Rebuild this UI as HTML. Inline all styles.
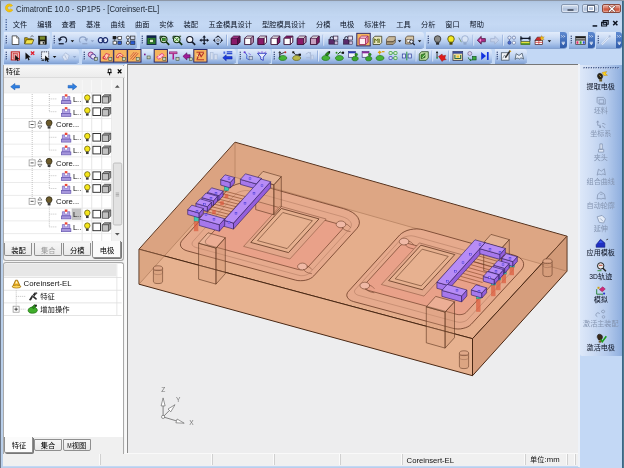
<!DOCTYPE html><html><head><meta charset="utf-8"><title>CimatronE 10.0 - SP1P5 - [Coreinsert-EL]</title><style>
html,body{margin:0;padding:0;background:#c3d8f5;}
body{width:624px;height:468px;overflow:hidden;font-family:"Liberation Sans","Noto Sans CJK SC",sans-serif;}
#app{position:relative;width:624px;height:468px;overflow:hidden;background:#c3d8f5;filter:blur(0.4px);}
#app div, #app svg{position:absolute;}
svg{overflow:visible}
svg text{font-family:"Liberation Sans","Noto Sans CJK SC",sans-serif;}
.t{white-space:nowrap;color:#000;line-height:1;}
</style></head><body><div id="app"><div class="titlebar" style="left:0px;top:0px;width:624px;height:16px;background:linear-gradient(#a9bfdc 0,#b4cae6 3px,#bcd1ec 9px,#c2d7f2 16px);"><svg width="10" height="10" style="left:4px;top:3px" viewBox="0 0 10 10"><path d="M8.6 2.6A4 4 0 1 0 8.8 7L6.6 5.9A1.7 1.7 0 1 1 6.5 3.8Z" fill="#f2c40c" stroke="#d9a400" stroke-width=".5"/></svg><div class="t" id="title" style="left:16px;top:4.9px;font-size:8.6px;color:#1b2430;transform:scaleX(0.898);transform-origin:0 0">CimatronE 10.0 - SP1P5 - [Coreinsert-EL]</div></div>
<div class="winbtns" style="left:560px;top:2px;width:62px;height:12px"><div style="left:1px;top:1.6px;width:18px;height:9.8px;border:1px solid #8697b0;border-radius:2px;box-sizing:border-box;box-shadow:inset 0 0 0 .7px rgba(255,255,255,.55);background:linear-gradient(#d3dfef,#bccbe2 48%,#aebfda 52%,#c6d5ea);"><div style="left:5px;top:4.2px;width:7px;height:2.4px;background:#fff;border:0.6px solid #5a6578;border-radius:1px;box-sizing:border-box"></div></div><div style="left:21.5px;top:1.6px;width:17.5px;height:9.8px;border:1px solid #8697b0;border-radius:2px;box-sizing:border-box;box-shadow:inset 0 0 0 .7px rgba(255,255,255,.55);background:linear-gradient(#d3dfef,#bccbe2 48%,#aebfda 52%,#c6d5ea);"><div style="left:5px;top:1.8px;width:6.6px;height:4.6px;background:transparent;border:1.2px solid #fff;outline:0.6px solid #5a6578;box-sizing:border-box"></div></div><div style="left:41.6px;top:1.6px;width:19.6px;height:9.8px;border:1px solid #8a4a3e;border-radius:2px;box-sizing:border-box;box-shadow:inset 0 0 0 .7px rgba(255,255,255,.35);background:linear-gradient(#e6a799,#d97a66 48%,#cc5038 52%,#dc8068);"><svg width="18" height="8" style="left:0;top:0" viewBox="0 0 18 8"><path d="M6.5 1.6L11.300 6.200M11.300 1.600L6.500 6.200" stroke="#6a342a" stroke-width="2.500" stroke-linecap="round"/><path d="M6.500 1.600L11.300 6.200M11.300 1.600L6.500 6.200" stroke="#fff" stroke-width="1.400" stroke-linecap="round"/></svg></div></div>
<div class="menubar" style="left:0px;top:16px;width:624px;height:16px;background:linear-gradient(#c0d5f1,#c5d9f4 50%,#bed3f0);"><svg width="624" height="16" style="left:0;top:0"><rect x="5.6" y="3.2" width="1.2" height="1.2" fill="#2b4a86"/><rect x="5.6" y="5.7" width="1.2" height="1.2" fill="#2b4a86"/><rect x="5.6" y="8.1" width="1.2" height="1.2" fill="#2b4a86"/><rect x="5.6" y="10.6" width="1.2" height="1.2" fill="#2b4a86"/><rect x="5.6" y="13.0" width="1.2" height="1.2" fill="#2b4a86"/><text x="12.8" y="10.9" font-size="7.25" fill="#0c1424">文件</text><text x="37.2" y="10.9" font-size="7.25" fill="#0c1424">编辑</text><text x="61.6" y="10.9" font-size="7.25" fill="#0c1424">查看</text><text x="86" y="10.9" font-size="7.25" fill="#0c1424">基准</text><text x="110.6" y="10.9" font-size="7.25" fill="#0c1424">曲线</text><text x="135" y="10.9" font-size="7.25" fill="#0c1424">曲面</text><text x="159.3" y="10.9" font-size="7.25" fill="#0c1424">实体</text><text x="183.5" y="10.9" font-size="7.25" fill="#0c1424">装配</text><text x="208.4" y="10.9" font-size="7.25" fill="#0c1424">五金模具设计</text><text x="262" y="10.9" font-size="7.25" fill="#0c1424">型腔模具设计</text><text x="316" y="10.9" font-size="7.25" fill="#0c1424">分模</text><text x="339.8" y="10.9" font-size="7.25" fill="#0c1424">电极</text><text x="364.2" y="10.9" font-size="7.25" fill="#0c1424">标准件</text><text x="396.2" y="10.9" font-size="7.25" fill="#0c1424">工具</text><text x="421" y="10.9" font-size="7.25" fill="#0c1424">分析</text><text x="445.2" y="10.9" font-size="7.25" fill="#0c1424">窗口</text><text x="469.6" y="10.9" font-size="7.25" fill="#0c1424">帮助</text><rect x="592.6" y="9.2" width="4.6" height="1.5" fill="#0b1220"/><path d="M603.2 4.6h5v3.6h-5zM601.6 6.4h5v3.6h-5z" fill="#c8dcf6" stroke="#0b1220" stroke-width="1.1"/><path d="M613.2 5l4.2 4.2M617.4 5l-4.2 4.2" stroke="#0b1220" stroke-width="1.5"/></svg></div>
<div class="tbarea" style="left:0px;top:32px;width:624px;height:32px;background:#c3d8f5;"></div>
<div class="toolbar" style="left:4px;top:32px;width:46px;height:16px;background:linear-gradient(#e2ecfb 0,#d0dff6 30%,#b0c8ec 68%,#86a7db 100%);border-radius:0 3px 3px 0;box-shadow:0 0.8px 0 #6f8fc4;"><svg width="4" height="16" style="left:0;top:0"><rect x="1.700" y="3.7" width="1.200" height="1.200" fill="#1f3468"/><rect x="2.600" y="4.5" width=".8" height=".8" fill="#fff" opacity=".6"/><rect x="1.700" y="5.9" width="1.200" height="1.200" fill="#1f3468"/><rect x="2.600" y="6.7" width=".8" height=".8" fill="#fff" opacity=".6"/><rect x="1.700" y="8.1" width="1.200" height="1.200" fill="#1f3468"/><rect x="2.600" y="8.9" width=".8" height=".8" fill="#fff" opacity=".6"/><rect x="1.700" y="10.3" width="1.200" height="1.200" fill="#1f3468"/><rect x="2.600" y="11.1" width=".8" height=".8" fill="#fff" opacity=".6"/></svg></div>
<div class="toolbar" style="left:52px;top:32px;width:85px;height:16px;background:linear-gradient(#e2ecfb 0,#d0dff6 30%,#b0c8ec 68%,#86a7db 100%);border-radius:0 3px 3px 0;box-shadow:0 0.8px 0 #6f8fc4;"><svg width="4" height="16" style="left:0;top:0"><rect x="1.700" y="3.7" width="1.200" height="1.200" fill="#1f3468"/><rect x="2.600" y="4.5" width=".8" height=".8" fill="#fff" opacity=".6"/><rect x="1.700" y="5.9" width="1.200" height="1.200" fill="#1f3468"/><rect x="2.600" y="6.7" width=".8" height=".8" fill="#fff" opacity=".6"/><rect x="1.700" y="8.1" width="1.200" height="1.200" fill="#1f3468"/><rect x="2.600" y="8.9" width=".8" height=".8" fill="#fff" opacity=".6"/><rect x="1.700" y="10.3" width="1.200" height="1.200" fill="#1f3468"/><rect x="2.600" y="11.1" width=".8" height=".8" fill="#fff" opacity=".6"/></svg></div>
<div class="toolbar" style="left:140px;top:32px;width:284px;height:16px;background:linear-gradient(#e2ecfb 0,#d0dff6 30%,#b0c8ec 68%,#86a7db 100%);border-radius:0 3px 3px 0;box-shadow:0 0.8px 0 #6f8fc4;"><svg width="4" height="16" style="left:0;top:0"><rect x="1.700" y="3.7" width="1.200" height="1.200" fill="#1f3468"/><rect x="2.600" y="4.5" width=".8" height=".8" fill="#fff" opacity=".6"/><rect x="1.700" y="5.9" width="1.200" height="1.200" fill="#1f3468"/><rect x="2.600" y="6.7" width=".8" height=".8" fill="#fff" opacity=".6"/><rect x="1.700" y="8.1" width="1.200" height="1.200" fill="#1f3468"/><rect x="2.600" y="8.9" width=".8" height=".8" fill="#fff" opacity=".6"/><rect x="1.700" y="10.3" width="1.200" height="1.200" fill="#1f3468"/><rect x="2.600" y="11.1" width=".8" height=".8" fill="#fff" opacity=".6"/></svg></div>
<div class="toolbar" style="left:426px;top:32px;width:141px;height:16px;background:linear-gradient(#e2ecfb 0,#d0dff6 30%,#b0c8ec 68%,#86a7db 100%);border-radius:0 3px 3px 0;box-shadow:0 0.8px 0 #6f8fc4;"><svg width="4" height="16" style="left:0;top:0"><rect x="1.700" y="3.7" width="1.200" height="1.200" fill="#1f3468"/><rect x="2.600" y="4.5" width=".8" height=".8" fill="#fff" opacity=".6"/><rect x="1.700" y="5.9" width="1.200" height="1.200" fill="#1f3468"/><rect x="2.600" y="6.7" width=".8" height=".8" fill="#fff" opacity=".6"/><rect x="1.700" y="8.1" width="1.200" height="1.200" fill="#1f3468"/><rect x="2.600" y="8.9" width=".8" height=".8" fill="#fff" opacity=".6"/><rect x="1.700" y="10.3" width="1.200" height="1.200" fill="#1f3468"/><rect x="2.600" y="11.1" width=".8" height=".8" fill="#fff" opacity=".6"/></svg></div>
<div class="toolbar" style="left:569px;top:32px;width:26px;height:16px;background:linear-gradient(#e2ecfb 0,#d0dff6 30%,#b0c8ec 68%,#86a7db 100%);border-radius:0 3px 3px 0;box-shadow:0 0.8px 0 #6f8fc4;"><svg width="4" height="16" style="left:0;top:0"><rect x="1.700" y="3.7" width="1.200" height="1.200" fill="#1f3468"/><rect x="2.600" y="4.5" width=".8" height=".8" fill="#fff" opacity=".6"/><rect x="1.700" y="5.9" width="1.200" height="1.200" fill="#1f3468"/><rect x="2.600" y="6.7" width=".8" height=".8" fill="#fff" opacity=".6"/><rect x="1.700" y="8.1" width="1.200" height="1.200" fill="#1f3468"/><rect x="2.600" y="8.9" width=".8" height=".8" fill="#fff" opacity=".6"/><rect x="1.700" y="10.3" width="1.200" height="1.200" fill="#1f3468"/><rect x="2.600" y="11.1" width=".8" height=".8" fill="#fff" opacity=".6"/></svg></div>
<div class="toolbar" style="left:596px;top:32px;width:26px;height:16px;background:linear-gradient(#e2ecfb 0,#d0dff6 30%,#b0c8ec 68%,#86a7db 100%);border-radius:0 3px 3px 0;box-shadow:0 0.8px 0 #6f8fc4;"><svg width="4" height="16" style="left:0;top:0"><rect x="1.700" y="3.7" width="1.200" height="1.200" fill="#1f3468"/><rect x="2.600" y="4.5" width=".8" height=".8" fill="#fff" opacity=".6"/><rect x="1.700" y="5.9" width="1.200" height="1.200" fill="#1f3468"/><rect x="2.600" y="6.7" width=".8" height=".8" fill="#fff" opacity=".6"/><rect x="1.700" y="8.1" width="1.200" height="1.200" fill="#1f3468"/><rect x="2.600" y="8.9" width=".8" height=".8" fill="#fff" opacity=".6"/><rect x="1.700" y="10.3" width="1.200" height="1.200" fill="#1f3468"/><rect x="2.600" y="11.1" width=".8" height=".8" fill="#fff" opacity=".6"/></svg></div>
<div class="toolbar" style="left:4px;top:48.6px;width:75px;height:14px;background:linear-gradient(#e2ecfb 0,#d0dff6 30%,#b0c8ec 68%,#86a7db 100%);border-radius:0 3px 3px 0;box-shadow:0 0.8px 0 #6f8fc4;"><svg width="4" height="14" style="left:0;top:0"><rect x="1.700" y="2.7" width="1.200" height="1.200" fill="#1f3468"/><rect x="2.600" y="3.5" width=".8" height=".8" fill="#fff" opacity=".6"/><rect x="1.700" y="4.9" width="1.200" height="1.200" fill="#1f3468"/><rect x="2.600" y="5.7" width=".8" height=".8" fill="#fff" opacity=".6"/><rect x="1.700" y="7.1" width="1.200" height="1.200" fill="#1f3468"/><rect x="2.600" y="7.9" width=".8" height=".8" fill="#fff" opacity=".6"/><rect x="1.700" y="9.3" width="1.200" height="1.200" fill="#1f3468"/><rect x="2.600" y="10.1" width=".8" height=".8" fill="#fff" opacity=".6"/></svg></div>
<div class="toolbar" style="left:82px;top:48.6px;width:154px;height:14px;background:linear-gradient(#e2ecfb 0,#d0dff6 30%,#b0c8ec 68%,#86a7db 100%);border-radius:0 3px 3px 0;box-shadow:0 0.8px 0 #6f8fc4;"><svg width="4" height="14" style="left:0;top:0"><rect x="1.700" y="2.7" width="1.200" height="1.200" fill="#1f3468"/><rect x="2.600" y="3.5" width=".8" height=".8" fill="#fff" opacity=".6"/><rect x="1.700" y="4.9" width="1.200" height="1.200" fill="#1f3468"/><rect x="2.600" y="5.7" width=".8" height=".8" fill="#fff" opacity=".6"/><rect x="1.700" y="7.1" width="1.200" height="1.200" fill="#1f3468"/><rect x="2.600" y="7.9" width=".8" height=".8" fill="#fff" opacity=".6"/><rect x="1.700" y="9.3" width="1.200" height="1.200" fill="#1f3468"/><rect x="2.600" y="10.1" width=".8" height=".8" fill="#fff" opacity=".6"/></svg></div>
<div class="toolbar" style="left:238px;top:48.6px;width:33px;height:14px;background:linear-gradient(#e2ecfb 0,#d0dff6 30%,#b0c8ec 68%,#86a7db 100%);border-radius:0 3px 3px 0;box-shadow:0 0.8px 0 #6f8fc4;"><svg width="4" height="14" style="left:0;top:0"><rect x="1.700" y="2.7" width="1.200" height="1.200" fill="#1f3468"/><rect x="2.600" y="3.5" width=".8" height=".8" fill="#fff" opacity=".6"/><rect x="1.700" y="4.9" width="1.200" height="1.200" fill="#1f3468"/><rect x="2.600" y="5.7" width=".8" height=".8" fill="#fff" opacity=".6"/><rect x="1.700" y="7.1" width="1.200" height="1.200" fill="#1f3468"/><rect x="2.600" y="7.9" width=".8" height=".8" fill="#fff" opacity=".6"/><rect x="1.700" y="9.3" width="1.200" height="1.200" fill="#1f3468"/><rect x="2.600" y="10.1" width=".8" height=".8" fill="#fff" opacity=".6"/></svg></div>
<div class="toolbar" style="left:272px;top:48.6px;width:220px;height:14px;background:linear-gradient(#e2ecfb 0,#d0dff6 30%,#b0c8ec 68%,#86a7db 100%);border-radius:0 3px 3px 0;box-shadow:0 0.8px 0 #6f8fc4;"><svg width="4" height="14" style="left:0;top:0"><rect x="1.700" y="2.7" width="1.200" height="1.200" fill="#1f3468"/><rect x="2.600" y="3.5" width=".8" height=".8" fill="#fff" opacity=".6"/><rect x="1.700" y="4.9" width="1.200" height="1.200" fill="#1f3468"/><rect x="2.600" y="5.7" width=".8" height=".8" fill="#fff" opacity=".6"/><rect x="1.700" y="7.1" width="1.200" height="1.200" fill="#1f3468"/><rect x="2.600" y="7.9" width=".8" height=".8" fill="#fff" opacity=".6"/><rect x="1.700" y="9.3" width="1.200" height="1.200" fill="#1f3468"/><rect x="2.600" y="10.1" width=".8" height=".8" fill="#fff" opacity=".6"/></svg></div>
<div class="toolbar" style="left:495px;top:48.6px;width:32px;height:14px;background:linear-gradient(#e2ecfb 0,#d0dff6 30%,#b0c8ec 68%,#86a7db 100%);border-radius:0 3px 3px 0;box-shadow:0 0.8px 0 #6f8fc4;"><svg width="4" height="14" style="left:0;top:0"><rect x="1.700" y="2.7" width="1.200" height="1.200" fill="#1f3468"/><rect x="2.600" y="3.5" width=".8" height=".8" fill="#fff" opacity=".6"/><rect x="1.700" y="4.9" width="1.200" height="1.200" fill="#1f3468"/><rect x="2.600" y="5.7" width=".8" height=".8" fill="#fff" opacity=".6"/><rect x="1.700" y="7.1" width="1.200" height="1.200" fill="#1f3468"/><rect x="2.600" y="7.9" width=".8" height=".8" fill="#fff" opacity=".6"/><rect x="1.700" y="9.3" width="1.200" height="1.200" fill="#1f3468"/><rect x="2.600" y="10.1" width=".8" height=".8" fill="#fff" opacity=".6"/></svg></div>
<div class="chev" style="left:560px;top:32px;width:6.5px;height:16px;background:linear-gradient(#5f8ad0,#3f6cb8 60%,#2f5ba8);border-radius:0 3px 3px 0;"><svg width="7" height="16" style="left:0;top:0"><path d="M1.3 3.4l1 1-1 1M3.6 3.4l1 1-1 1" stroke="#fff" stroke-width=".8" fill="none"/><path d="M1.6 11.2h3.4l-1.7 1.8z" fill="#fff"/><rect x="1.6" y="9.8" width="3.4" height=".8" fill="#fff"/></svg></div>
<div class="chev" style="left:588px;top:32px;width:6.5px;height:16px;background:linear-gradient(#5f8ad0,#3f6cb8 60%,#2f5ba8);border-radius:0 3px 3px 0;"><svg width="7" height="16" style="left:0;top:0"><path d="M1.3 3.4l1 1-1 1M3.6 3.4l1 1-1 1" stroke="#fff" stroke-width=".8" fill="none"/><path d="M1.6 11.2h3.4l-1.7 1.8z" fill="#fff"/><rect x="1.6" y="9.8" width="3.4" height=".8" fill="#fff"/></svg></div>
<div class="chev" style="left:615.5px;top:32px;width:6.5px;height:16px;background:linear-gradient(#5f8ad0,#3f6cb8 60%,#2f5ba8);border-radius:0 3px 3px 0;"><svg width="7" height="16" style="left:0;top:0"><path d="M1.3 3.4l1 1-1 1M3.6 3.4l1 1-1 1" stroke="#fff" stroke-width=".8" fill="none"/><path d="M1.6 11.2h3.4l-1.7 1.8z" fill="#fff"/><rect x="1.6" y="9.8" width="3.4" height=".8" fill="#fff"/></svg></div>
<div class="statusbar" style="left:0px;top:452.6px;width:579.5px;height:13.9px;background:#f0f0f0;border-top:1.4px solid #f9f9f9;box-sizing:border-box;"><div style="left:100px;top:0.8px;width:112px;height:11px;border-left:1px solid #d0d0d0;box-shadow:-1px 0 0 #fbfbfb;"></div><div style="left:212px;top:0.8px;width:62px;height:11px;border-left:1px solid #d0d0d0;box-shadow:-1px 0 0 #fbfbfb;"></div><div style="left:274px;top:0.8px;width:65.5px;height:11px;border-left:1px solid #d0d0d0;box-shadow:-1px 0 0 #fbfbfb;"></div><div style="left:339.5px;top:0.8px;width:62.5px;height:11px;border-left:1px solid #d0d0d0;box-shadow:-1px 0 0 #fbfbfb;"></div><div style="left:402px;top:0.8px;width:122.5px;height:11px;border-left:1px solid #d0d0d0;box-shadow:-1px 0 0 #fbfbfb;"><div class="t" style="left:3.6px;top:2.2px;font-size:7.7px;color:#111">Coreinsert-EL</div></div><div style="left:524.5px;top:0.8px;width:42.5px;height:11px;border-left:1px solid #d0d0d0;box-shadow:-1px 0 0 #fbfbfb;"><svg width="45" height="11" style="left:0;top:0"><text x="4" y="8" font-size="7.2" fill="#111">单位</text><text x="18.6" y="8.2" font-size="7.7" fill="#111">:mm</text></svg></div><div style="left:567px;top:0.8px;width:7.5px;height:11px;border-left:1px solid #d0d0d0;box-shadow:-1px 0 0 #fbfbfb;"></div><div style="left:574.5px;top:0.8px;width:5px;height:11px;border-left:1px solid #d0d0d0;box-shadow:-1px 0 0 #fbfbfb;"></div></div>
<div class="frame-l" style="left:0px;top:0px;width:1px;height:468px;background:#6d7787;"></div>
<div class="frame-l2" style="left:1px;top:16px;width:2px;height:452px;background:#b9cfea;"></div>
<div class="frame-r" style="left:622px;top:0px;width:2px;height:468px;background:linear-gradient(90deg,#2f5f7d,#5d8096);"></div>
<div class="frame-t" style="left:0px;top:0px;width:624px;height:1px;background:#8d97a6;"></div>
<div class="frame-b" style="left:1px;top:466.5px;width:578px;height:1.5px;background:#b9cfea;"></div>
<div class="leftdock" style="left:3px;top:64.5px;width:125px;height:388.5px;background:#f3f3f3;"></div>
<div class="panel1" style="left:3px;top:65px;width:121.2px;height:195.8px;border:1px solid #a9a9a9;border-top:none;border-radius:0 0 3px 3px;box-sizing:border-box;background:#f0f0f0;"></div>
<div class="panelhdr" style="left:4px;top:65.5px;width:120.5px;height:12px;background:linear-gradient(#f7f7f7,#ececec);border-bottom:1px solid #dcdcdc;box-sizing:border-box;"><svg width="121" height="12" style="left:0;top:0"><text x="1.8" y="8.4" font-size="7.3" fill="#000">特征</text><path d="M104.3 3.2h2.6v3.4h-2.6zM103.4 6.7h4.4M105.6 6.7v2.6" stroke="#000" stroke-width=".9" fill="#fff"/><path d="M113.8 3.4l3.6 3.8M117.4 3.4l-3.6 3.8" stroke="#000" stroke-width="1.3"/></svg></div>
<div class="tree1" style="left:4.3px;top:79.5px;width:118.9px;height:161.2px;background:#fff;overflow:hidden;"><svg width="118.9" height="161.2" style="left:0;top:0"><rect x="0" y="0" width="118.9" height="161.2" fill="#fff"/><rect x="0" y="0" width="108" height="12.6" fill="#f1f1f1"/><rect x="77.7" y="0" width=".9" height="161.2" fill="#e3e3e3"/><rect x="77.7" y="0" width=".9" height="12.6" fill="#fff"/><rect x="87.3" y="0" width=".9" height="161.2" fill="#e3e3e3"/><rect x="87.3" y="0" width=".9" height="12.6" fill="#fff"/><rect x="97.3" y="0" width=".9" height="161.2" fill="#e3e3e3"/><rect x="97.3" y="0" width=".9" height="12.6" fill="#fff"/><rect x="107.3" y="0" width=".9" height="161.2" fill="#e3e3e3"/><rect x="107.3" y="0" width=".9" height="12.6" fill="#fff"/><rect x="0" y="12.50" width="107.7" height=".8" fill="#e6e6e6"/><rect x="0" y="25.30" width="107.7" height=".8" fill="#e6e6e6"/><rect x="0" y="38.10" width="107.7" height=".8" fill="#e6e6e6"/><rect x="0" y="50.90" width="107.7" height=".8" fill="#e6e6e6"/><rect x="0" y="63.70" width="107.7" height=".8" fill="#e6e6e6"/><rect x="0" y="76.50" width="107.7" height=".8" fill="#e6e6e6"/><rect x="0" y="89.30" width="107.7" height=".8" fill="#e6e6e6"/><rect x="0" y="102.10" width="107.7" height=".8" fill="#e6e6e6"/><rect x="0" y="114.90" width="107.7" height=".8" fill="#e6e6e6"/><rect x="0" y="127.70" width="107.7" height=".8" fill="#e6e6e6"/><rect x="0" y="140.50" width="107.7" height=".8" fill="#e6e6e6"/><rect x="0" y="153.30" width="107.7" height=".8" fill="#e6e6e6"/><path d="M6.70 6.70l4.20 -3.2v1.9h4.60v2.6h-4.60v1.9z" fill="#2f7fe0" stroke="#1656b0" stroke-width=".5"/><path d="M72.90 6.70l-4.20 -3.2v1.9h-4.60v2.6h4.60v1.9z" fill="#2f7fe0" stroke="#1656b0" stroke-width=".5"/><path d="M28.2 14.0V121.3" stroke="#b4b4b4" stroke-width=".8" stroke-dasharray="1 1"/><path d="M45.3 14.0V31.7" stroke="#b4b4b4" stroke-width=".8" stroke-dasharray="1 1"/><path d="M45.3 18.9H52.7" stroke="#b4b4b4" stroke-width=".8" stroke-dasharray="1 1"/><path d="M45.3 31.7H52.7" stroke="#b4b4b4" stroke-width=".8" stroke-dasharray="1 1"/><path d="M45.3 48.5V70.1" stroke="#b4b4b4" stroke-width=".8" stroke-dasharray="1 1"/><path d="M45.3 57.3H52.7" stroke="#b4b4b4" stroke-width=".8" stroke-dasharray="1 1"/><path d="M45.3 70.1H52.7" stroke="#b4b4b4" stroke-width=".8" stroke-dasharray="1 1"/><path d="M31.2 44.5H33.7" stroke="#b4b4b4" stroke-width=".8" stroke-dasharray="1 1"/><path d="M45.3 86.9V108.5" stroke="#b4b4b4" stroke-width=".8" stroke-dasharray="1 1"/><path d="M45.3 95.7H52.7" stroke="#b4b4b4" stroke-width=".8" stroke-dasharray="1 1"/><path d="M45.3 108.5H52.7" stroke="#b4b4b4" stroke-width=".8" stroke-dasharray="1 1"/><path d="M31.2 82.9H33.7" stroke="#b4b4b4" stroke-width=".8" stroke-dasharray="1 1"/><path d="M45.3 125.3V146.9" stroke="#b4b4b4" stroke-width=".8" stroke-dasharray="1 1"/><path d="M45.3 134.1H52.7" stroke="#b4b4b4" stroke-width=".8" stroke-dasharray="1 1"/><path d="M45.3 146.9H52.7" stroke="#b4b4b4" stroke-width=".8" stroke-dasharray="1 1"/><path d="M31.2 121.3H33.7" stroke="#b4b4b4" stroke-width=".8" stroke-dasharray="1 1"/><g transform="translate(62.10 18.90)"><path d="M-3.700 2v-4.400h2.300v2h2.800v-2h2.300v4.400z" fill="#b4a4e6" stroke="#6656b4" stroke-width=".6"/><rect x="-4.800" y="1.800" width="9.600" height="3" fill="#a696dc" stroke="#5b4ca8" stroke-width=".6"/><rect x="-1.300" y="-4.600" width="2.600" height="2.400" fill="#ee4636"/><rect x="-1.200" y="-2.200" width="2.400" height="1.800" fill="#fff" opacity=".8"/></g><text x="68.9" y="21.7" font-size="7.6" fill="#111">L..</text><g transform="translate(83.30 18.90) scale(0.88)"><path d="M0 -4.6a3.1 3.1 0 0 1 3.1 3.1c0 1.4-1 2-1.3 3.1h-3.6c-.3-1.1-1.3-1.7-1.3-3.1a3.1 3.1 0 0 1 3.1-3.1z" fill="#f5e61c" stroke="#5a5200" stroke-width=".8"/><rect x="-1.5" y="2" width="3" height="2.5" fill="#3c3c3c"/></g><rect x="88.90" y="15.10" width="7.6" height="7.6" fill="#fff" stroke="#222" stroke-width=".9"/><g transform="translate(102.50 18.90)"><path d="M-4.2 -2.2l2.2-2h6.2v6.2l-2.2 2.2h-6.2z" fill="#979797" stroke="#3c3c3c" stroke-width=".7"/><path d="M-4.2 -2.2h6.2v6.6M2 -2.2l2.2-2" fill="none" stroke="#444" stroke-width=".7"/><rect x="-3.500" y="-1.500" width="5" height="5.200" fill="#c2c2c2"/></g><g transform="translate(62.10 31.70)"><path d="M-3.700 2v-4.400h2.300v2h2.800v-2h2.300v4.400z" fill="#b4a4e6" stroke="#6656b4" stroke-width=".6"/><rect x="-4.800" y="1.800" width="9.600" height="3" fill="#a696dc" stroke="#5b4ca8" stroke-width=".6"/><rect x="-1.300" y="-4.600" width="2.600" height="2.400" fill="#ee4636"/><rect x="-1.200" y="-2.200" width="2.400" height="1.800" fill="#fff" opacity=".8"/></g><text x="68.9" y="34.5" font-size="7.6" fill="#111">L..</text><g transform="translate(83.30 31.70) scale(0.88)"><path d="M0 -4.6a3.1 3.1 0 0 1 3.1 3.1c0 1.4-1 2-1.3 3.1h-3.6c-.3-1.1-1.3-1.7-1.3-3.1a3.1 3.1 0 0 1 3.1-3.1z" fill="#f5e61c" stroke="#5a5200" stroke-width=".8"/><rect x="-1.5" y="2" width="3" height="2.5" fill="#3c3c3c"/></g><rect x="88.90" y="27.90" width="7.6" height="7.6" fill="#fff" stroke="#222" stroke-width=".9"/><g transform="translate(102.50 31.70)"><path d="M-4.2 -2.2l2.2-2h6.2v6.2l-2.2 2.2h-6.2z" fill="#979797" stroke="#3c3c3c" stroke-width=".7"/><path d="M-4.2 -2.2h6.2v6.6M2 -2.2l2.2-2" fill="none" stroke="#444" stroke-width=".7"/><rect x="-3.500" y="-1.500" width="5" height="5.200" fill="#c2c2c2"/></g><rect x="25.1" y="41.5" width="6" height="6" fill="#fff" stroke="#8c8c8c" stroke-width=".7"/><path d="M26.6 44.5h3" stroke="#222" stroke-width=".8"/><path d="M33.9 43.3l2-2.8 2 2.8zM33.9 45.9l2 2.8 2-2.8z" fill="#fff" stroke="#444" stroke-width=".6"/><g transform="translate(45.10 44.30) scale(0.95)"><path d="M0 -4.6a3.1 3.1 0 0 1 3.1 3.1c0 1.4-1 2-1.3 3.1h-3.6c-.3-1.1-1.3-1.7-1.3-3.1a3.1 3.1 0 0 1 3.1-3.1z" fill="#6b5a2a" stroke="#2a2410" stroke-width=".8"/><rect x="-1.5" y="2" width="3" height="2.5" fill="#3c3c3c"/></g><text x="52.1" y="47.3" font-size="7.7" fill="#111">Core...</text><g transform="translate(62.10 57.30)"><path d="M-3.700 2v-4.400h2.300v2h2.800v-2h2.300v4.400z" fill="#b4a4e6" stroke="#6656b4" stroke-width=".6"/><rect x="-4.800" y="1.800" width="9.600" height="3" fill="#a696dc" stroke="#5b4ca8" stroke-width=".6"/><rect x="-1.300" y="-4.600" width="2.600" height="2.400" fill="#ee4636"/><rect x="-1.200" y="-2.200" width="2.400" height="1.800" fill="#fff" opacity=".8"/></g><text x="68.9" y="60.1" font-size="7.6" fill="#111">L..</text><g transform="translate(83.30 57.30) scale(0.88)"><path d="M0 -4.6a3.1 3.1 0 0 1 3.1 3.1c0 1.4-1 2-1.3 3.1h-3.6c-.3-1.1-1.3-1.7-1.3-3.1a3.1 3.1 0 0 1 3.1-3.1z" fill="#f5e61c" stroke="#5a5200" stroke-width=".8"/><rect x="-1.5" y="2" width="3" height="2.5" fill="#3c3c3c"/></g><rect x="88.90" y="53.50" width="7.6" height="7.6" fill="#fff" stroke="#222" stroke-width=".9"/><g transform="translate(102.50 57.30)"><path d="M-4.2 -2.2l2.2-2h6.2v6.2l-2.2 2.2h-6.2z" fill="#979797" stroke="#3c3c3c" stroke-width=".7"/><path d="M-4.2 -2.2h6.2v6.6M2 -2.2l2.2-2" fill="none" stroke="#444" stroke-width=".7"/><rect x="-3.500" y="-1.500" width="5" height="5.200" fill="#c2c2c2"/></g><g transform="translate(62.10 70.10)"><path d="M-3.700 2v-4.400h2.300v2h2.800v-2h2.300v4.400z" fill="#b4a4e6" stroke="#6656b4" stroke-width=".6"/><rect x="-4.800" y="1.800" width="9.600" height="3" fill="#a696dc" stroke="#5b4ca8" stroke-width=".6"/><rect x="-1.300" y="-4.600" width="2.600" height="2.400" fill="#ee4636"/><rect x="-1.200" y="-2.200" width="2.400" height="1.800" fill="#fff" opacity=".8"/></g><text x="68.9" y="72.9" font-size="7.6" fill="#111">L..</text><g transform="translate(83.30 70.10) scale(0.88)"><path d="M0 -4.6a3.1 3.1 0 0 1 3.1 3.1c0 1.4-1 2-1.3 3.1h-3.6c-.3-1.1-1.3-1.7-1.3-3.1a3.1 3.1 0 0 1 3.1-3.1z" fill="#f5e61c" stroke="#5a5200" stroke-width=".8"/><rect x="-1.5" y="2" width="3" height="2.5" fill="#3c3c3c"/></g><rect x="88.90" y="66.30" width="7.6" height="7.6" fill="#fff" stroke="#222" stroke-width=".9"/><g transform="translate(102.50 70.10)"><path d="M-4.2 -2.2l2.2-2h6.2v6.2l-2.2 2.2h-6.2z" fill="#979797" stroke="#3c3c3c" stroke-width=".7"/><path d="M-4.2 -2.2h6.2v6.6M2 -2.2l2.2-2" fill="none" stroke="#444" stroke-width=".7"/><rect x="-3.500" y="-1.500" width="5" height="5.200" fill="#c2c2c2"/></g><rect x="25.1" y="79.9" width="6" height="6" fill="#fff" stroke="#8c8c8c" stroke-width=".7"/><path d="M26.6 82.9h3" stroke="#222" stroke-width=".8"/><path d="M33.9 81.7l2-2.8 2 2.8zM33.9 84.3l2 2.8 2-2.8z" fill="#fff" stroke="#444" stroke-width=".6"/><g transform="translate(45.10 82.70) scale(0.95)"><path d="M0 -4.6a3.1 3.1 0 0 1 3.1 3.1c0 1.4-1 2-1.3 3.1h-3.6c-.3-1.1-1.3-1.7-1.3-3.1a3.1 3.1 0 0 1 3.1-3.1z" fill="#6b5a2a" stroke="#2a2410" stroke-width=".8"/><rect x="-1.5" y="2" width="3" height="2.5" fill="#3c3c3c"/></g><text x="52.1" y="85.7" font-size="7.7" fill="#111">Core...</text><g transform="translate(62.10 95.70)"><path d="M-3.700 2v-4.400h2.300v2h2.800v-2h2.300v4.400z" fill="#b4a4e6" stroke="#6656b4" stroke-width=".6"/><rect x="-4.800" y="1.800" width="9.600" height="3" fill="#a696dc" stroke="#5b4ca8" stroke-width=".6"/><rect x="-1.300" y="-4.600" width="2.600" height="2.400" fill="#ee4636"/><rect x="-1.200" y="-2.200" width="2.400" height="1.800" fill="#fff" opacity=".8"/></g><text x="68.9" y="98.5" font-size="7.6" fill="#111">L..</text><g transform="translate(83.30 95.70) scale(0.88)"><path d="M0 -4.6a3.1 3.1 0 0 1 3.1 3.1c0 1.4-1 2-1.3 3.1h-3.6c-.3-1.1-1.3-1.7-1.3-3.1a3.1 3.1 0 0 1 3.1-3.1z" fill="#f5e61c" stroke="#5a5200" stroke-width=".8"/><rect x="-1.5" y="2" width="3" height="2.5" fill="#3c3c3c"/></g><rect x="88.90" y="91.90" width="7.6" height="7.6" fill="#fff" stroke="#222" stroke-width=".9"/><g transform="translate(102.50 95.70)"><path d="M-4.2 -2.2l2.2-2h6.2v6.2l-2.2 2.2h-6.2z" fill="#979797" stroke="#3c3c3c" stroke-width=".7"/><path d="M-4.2 -2.2h6.2v6.6M2 -2.2l2.2-2" fill="none" stroke="#444" stroke-width=".7"/><rect x="-3.500" y="-1.500" width="5" height="5.200" fill="#c2c2c2"/></g><g transform="translate(62.10 108.50)"><path d="M-3.700 2v-4.400h2.300v2h2.800v-2h2.300v4.400z" fill="#b4a4e6" stroke="#6656b4" stroke-width=".6"/><rect x="-4.800" y="1.800" width="9.600" height="3" fill="#a696dc" stroke="#5b4ca8" stroke-width=".6"/><rect x="-1.300" y="-4.600" width="2.600" height="2.400" fill="#ee4636"/><rect x="-1.200" y="-2.200" width="2.400" height="1.800" fill="#fff" opacity=".8"/></g><text x="68.9" y="111.3" font-size="7.6" fill="#111">L..</text><g transform="translate(83.30 108.50) scale(0.88)"><path d="M0 -4.6a3.1 3.1 0 0 1 3.1 3.1c0 1.4-1 2-1.3 3.1h-3.6c-.3-1.1-1.3-1.7-1.3-3.1a3.1 3.1 0 0 1 3.1-3.1z" fill="#f5e61c" stroke="#5a5200" stroke-width=".8"/><rect x="-1.5" y="2" width="3" height="2.5" fill="#3c3c3c"/></g><rect x="88.90" y="104.70" width="7.6" height="7.6" fill="#fff" stroke="#222" stroke-width=".9"/><g transform="translate(102.50 108.50)"><path d="M-4.2 -2.2l2.2-2h6.2v6.2l-2.2 2.2h-6.2z" fill="#979797" stroke="#3c3c3c" stroke-width=".7"/><path d="M-4.2 -2.2h6.2v6.6M2 -2.2l2.2-2" fill="none" stroke="#444" stroke-width=".7"/><rect x="-3.500" y="-1.500" width="5" height="5.200" fill="#c2c2c2"/></g><rect x="25.1" y="118.3" width="6" height="6" fill="#fff" stroke="#8c8c8c" stroke-width=".7"/><path d="M26.6 121.3h3" stroke="#222" stroke-width=".8"/><path d="M33.9 120.1l2-2.8 2 2.8zM33.9 122.7l2 2.8 2-2.8z" fill="#fff" stroke="#444" stroke-width=".6"/><g transform="translate(45.10 121.10) scale(0.95)"><path d="M0 -4.6a3.1 3.1 0 0 1 3.1 3.1c0 1.4-1 2-1.3 3.1h-3.6c-.3-1.1-1.3-1.7-1.3-3.1a3.1 3.1 0 0 1 3.1-3.1z" fill="#6b5a2a" stroke="#2a2410" stroke-width=".8"/><rect x="-1.5" y="2" width="3" height="2.5" fill="#3c3c3c"/></g><text x="52.1" y="124.1" font-size="7.7" fill="#111">Core...</text><rect x="67.7" y="128.5" width="9.6" height="11.4" fill="#c3c3c3"/><g transform="translate(62.10 134.10)"><path d="M-3.700 2v-4.400h2.300v2h2.800v-2h2.300v4.400z" fill="#b4a4e6" stroke="#6656b4" stroke-width=".6"/><rect x="-4.800" y="1.800" width="9.600" height="3" fill="#a696dc" stroke="#5b4ca8" stroke-width=".6"/><rect x="-1.300" y="-4.600" width="2.600" height="2.400" fill="#ee4636"/><rect x="-1.200" y="-2.200" width="2.400" height="1.800" fill="#fff" opacity=".8"/></g><text x="68.9" y="136.9" font-size="7.6" fill="#111">L..</text><g transform="translate(83.30 134.10) scale(0.88)"><path d="M0 -4.6a3.1 3.1 0 0 1 3.1 3.1c0 1.4-1 2-1.3 3.1h-3.6c-.3-1.1-1.3-1.7-1.3-3.1a3.1 3.1 0 0 1 3.1-3.1z" fill="#f5e61c" stroke="#5a5200" stroke-width=".8"/><rect x="-1.5" y="2" width="3" height="2.5" fill="#3c3c3c"/></g><rect x="88.90" y="130.30" width="7.6" height="7.6" fill="#fff" stroke="#222" stroke-width=".9"/><g transform="translate(102.50 134.10)"><path d="M-4.2 -2.2l2.2-2h6.2v6.2l-2.2 2.2h-6.2z" fill="#979797" stroke="#3c3c3c" stroke-width=".7"/><path d="M-4.2 -2.2h6.2v6.6M2 -2.2l2.2-2" fill="none" stroke="#444" stroke-width=".7"/><rect x="-3.500" y="-1.500" width="5" height="5.200" fill="#c2c2c2"/></g><g transform="translate(62.10 146.90)"><path d="M-3.700 2v-4.400h2.300v2h2.800v-2h2.300v4.400z" fill="#b4a4e6" stroke="#6656b4" stroke-width=".6"/><rect x="-4.800" y="1.800" width="9.600" height="3" fill="#a696dc" stroke="#5b4ca8" stroke-width=".6"/><rect x="-1.300" y="-4.600" width="2.600" height="2.400" fill="#ee4636"/><rect x="-1.200" y="-2.200" width="2.400" height="1.800" fill="#fff" opacity=".8"/></g><text x="68.9" y="149.7" font-size="7.6" fill="#111">L..</text><g transform="translate(83.30 146.90) scale(0.88)"><path d="M0 -4.6a3.1 3.1 0 0 1 3.1 3.1c0 1.4-1 2-1.3 3.1h-3.6c-.3-1.1-1.3-1.7-1.3-3.1a3.1 3.1 0 0 1 3.1-3.1z" fill="#f5e61c" stroke="#5a5200" stroke-width=".8"/><rect x="-1.5" y="2" width="3" height="2.5" fill="#3c3c3c"/></g><rect x="88.90" y="143.10" width="7.6" height="7.6" fill="#fff" stroke="#222" stroke-width=".9"/><g transform="translate(102.50 146.90)"><path d="M-4.2 -2.2l2.2-2h6.2v6.2l-2.2 2.2h-6.2z" fill="#979797" stroke="#3c3c3c" stroke-width=".7"/><path d="M-4.2 -2.2h6.2v6.6M2 -2.2l2.2-2" fill="none" stroke="#444" stroke-width=".7"/><rect x="-3.500" y="-1.500" width="5" height="5.200" fill="#c2c2c2"/></g><rect x="108.2" y="0" width="10.7" height="161.2" fill="#f1f1f1"/><path d="M110.9 7.7l2.4-2.6 2.4 2.6z" fill="#555"/><path d="M110.9 152.9l2.4 2.6 2.4-2.6z" fill="#555"/><rect x="109.3" y="83.0" width="8.4" height="62" rx="1.5" fill="#e2e2e2" stroke="#b5b5b5" stroke-width=".8"/><path d="M111.7 113.0h3.4m-3.4 1.5h3.4m-3.4 1.5h3.4" stroke="#8a8a8a" stroke-width=".6"/></svg></div>
<div class="tab" style="left:4.2px;top:243.2px;width:28.2px;height:13.2px;box-sizing:border-box;border:1px solid #8f8f8f;border-top:none;border-radius:0 0 2px 2px;background:linear-gradient(#f6f6f6,#e9e9e9);"><svg width="28.2" height="13.2" style="left:0;top:0"><text x="6.2" y="9.57" font-size="7.3" fill="#000">装配</text></svg></div>
<div class="tab" style="left:33.7px;top:243.2px;width:27.9px;height:13.2px;box-sizing:border-box;border:1px solid #8f8f8f;border-top:none;border-radius:0 0 2px 2px;background:linear-gradient(#f6f6f6,#e9e9e9);"><svg width="27.9" height="13.2" style="left:0;top:0"><text x="6.05" y="9.57" font-size="7.3" fill="#9a9a9a">集合</text></svg></div>
<div class="tab" style="left:63px;top:243.2px;width:27.7px;height:13.2px;box-sizing:border-box;border:1px solid #8f8f8f;border-top:none;border-radius:0 0 2px 2px;background:linear-gradient(#f6f6f6,#e9e9e9);"><svg width="27.7" height="13.2" style="left:0;top:0"><text x="5.95" y="9.57" font-size="7.3" fill="#000">分模</text></svg></div>
<div class="tab" style="left:91.6px;top:240.7px;width:29.4px;height:17.4px;box-sizing:border-box;border:1px solid #8f8f8f;border-top:none;border-radius:0 0 2px 2px;background:#fbfbfb;border-top:none;box-shadow:1px 1px 0 #777;"><svg width="29.4" height="17.4" style="left:0;top:0"><text x="6.8" y="12.07" font-size="7.3" fill="#000">电极</text></svg></div>
<div class="panel2" style="left:3px;top:262.4px;width:121.2px;height:191.6px;border:1px solid #a9a9a9;border-bottom:none;border-radius:3px 3px 0 0;box-sizing:border-box;background:#f0f0f0;"></div>
<div class="tree2" style="left:4.3px;top:263.6px;width:118.9px;height:173.7px;background:#fff;overflow:hidden;"><svg width="118.9" height="173.7" style="left:0;top:0"><rect x="0" y="0" width="118.9" height="173.7" fill="#fff"/><rect x="0" y="0" width="112.3" height="12.4" fill="#e7e7e7"/><rect x="112.5" y="0" width=".8" height="51.4" fill="#e0e0e0"/><rect x="0" y="13.2" width="117.7" height=".8" fill="#dedede"/><rect x="0" y="25.8" width="117.7" height=".8" fill="#dedede"/><rect x="0" y="38.5" width="117.7" height=".8" fill="#dedede"/><rect x="0" y="51.2" width="117.7" height=".8" fill="#dedede"/><g transform="translate(12.5 19.6)"><path d="M-4 3.4l3-6.8h2l3 6.8z" fill="#f2b21a" stroke="#8a5a00" stroke-width=".7"/><ellipse cx="0" cy="3" rx="4.2" ry="1.5" fill="#ffd75a" stroke="#8a5a00" stroke-width=".6"/><path d="M-1.4 -0.2l1.4-2.6 1.4 2.6z" fill="#fff6c8"/></g><text x="19.5" y="22.4" font-size="7.8" fill="#111">Coreinsert-EL</text><path d="M12.2 26.4V45.4M12.2 32.4H21.7" stroke="#b4b4b4" stroke-width=".8" stroke-dasharray="1 1"/><g transform="translate(28.7 32.4)"><path d="M-3.8 3.6l3.2-5 1.4 1-2.6 4.6zM0 -1.6l2.2-2.6 1.6 1.4-2 2.6zM-0.2 0.6l3.6 3 .9-1.2-3.3-3z" fill="#2a2a2a"/><circle cx="3.6" cy="-3.2" r="1" fill="#555"/></g><text x="36.3" y="34.9" font-size="7.3" fill="#111">特征</text><rect x="9.1" y="42.2" width="6" height="6" fill="#fff" stroke="#8c8c8c" stroke-width=".7"/><path d="M10.4 45.2h3.4M12.1 43.5v3.4" stroke="#222" stroke-width=".8"/><path d="M15.3 45.2H21.7" stroke="#b4b4b4" stroke-width=".8" stroke-dasharray="1 1"/><g transform="translate(28.7 45.2)"><path d="M-4.6 1.2c0-2 2.4-3.4 4.6-3.4s4.6 1.2 4.6 3.2-2 3-4.6 3-4.6-.8-4.6-2.8z" fill="#3fae2a" stroke="#1d6a12" stroke-width=".7"/><path d="M-1 -1.8l2.6-2.8 2 1.6-2.4 2.4z" fill="#2a8a1a" stroke="#14500c" stroke-width=".5"/><circle cx="3.2" cy="-3.6" r="1.1" fill="#222"/></g><text x="36.3" y="47.7" font-size="7.3" fill="#111">增加操作</text></svg></div>
<div class="tab" style="left:4px;top:437.3px;width:29.3px;height:15.6px;box-sizing:border-box;border:1px solid #8f8f8f;border-top:none;border-radius:0 0 2px 2px;background:#fbfbfb;border-top:none;box-shadow:1px 1px 0 #777;"><svg width="29.3" height="15.6" style="left:0;top:0"><text x="6.75" y="10.77" font-size="7.3" fill="#000">特征</text></svg></div>
<div class="tab" style="left:34.2px;top:438.6px;width:27.4px;height:12.6px;box-sizing:border-box;border:1px solid #8f8f8f;border-radius:0 0 2px 2px;background:linear-gradient(#f6f6f6,#e9e9e9);"><svg width="27.4" height="12.6" style="left:0;top:0"><text x="5.8" y="8.47" font-size="7.3" fill="#000">集合</text></svg></div>
<div class="tab" style="left:63px;top:438.6px;width:28.2px;height:12.6px;box-sizing:border-box;border:1px solid #8f8f8f;border-radius:0 0 2px 2px;background:linear-gradient(#f6f6f6,#e9e9e9);"><svg width="28.2" height="12.6" style="left:0;top:0"><text x="3.20" y="8.33" font-size="7.67" fill="#000" textLength="4.4" lengthAdjust="spacingAndGlyphs">M</text><text x="7.73" y="8.47" font-size="7.3" fill="#000">视图</text></svg></div>
<div class="splitter" style="left:124.6px;top:64px;width:2.6px;height:389px;background:#f8f8f8;"></div>
<div class="viewport" style="left:127px;top:63.8px;width:451.5px;height:388.9px;background:#ededee;border-top:1px solid #777;border-left:1px solid #8a8a8a;box-sizing:border-box;overflow:hidden;"><svg width="451.5" height="388.9" style="left:-1px;top:-1px"><polygon points="108.0,78.2 440.0,172.2 345.5,274.7 12.0,185.2" fill="#e5ae8c" stroke="#4a2814" stroke-width="1.0" stroke-linejoin="round"/><polygon points="12.0,185.2 345.5,274.7 345.5,311.7 12.0,220.2" fill="#e7b290" stroke="#4a2814" stroke-width="1.0" stroke-linejoin="round"/><polygon points="440.0,172.2 345.5,274.7 345.5,311.7 440.0,207.2" fill="#d69e7d" stroke="#4a2814" stroke-width="1.0" stroke-linejoin="round"/><polyline points="108.0,78.2 108.0,113.2 12.0,220.2" fill="none" stroke="#8a5a3c" stroke-width="0.6" stroke-linejoin="round" stroke-opacity="0.8"/><polyline points="108.0,113.2 440.0,207.2" fill="none" stroke="#8a5a3c" stroke-width="0.6" stroke-linejoin="round" stroke-opacity="0.7"/><polygon points="108.0,78.2 12.0,185.2 12.0,220.2 108.0,113.2" fill="#c98f6c" stroke="none" stroke-width="0" stroke-linejoin="round" fill-opacity="0.35"/><polygon points="108.0,78.2 440.0,172.2 440.0,207.2 108.0,113.2" fill="#c98f6c" stroke="none" stroke-width="0" stroke-linejoin="round" fill-opacity="0.25"/><polygon points="216.7,144.7 221.3,146.3 225.3,148.3 228.5,150.7 230.8,153.4 232.1,156.3 232.4,159.2 231.6,162.0 229.7,164.7 186.8,211.9 185.3,213.3 183.4,214.5 181.2,215.5 178.7,216.2 176.1,216.6 173.5,216.7 170.9,216.6 168.5,216.1 60.2,186.9 58.0,186.1 56.2,185.1 54.8,183.9 53.9,182.5 53.4,181.0 53.5,179.4 54.1,177.8 55.2,176.3 100.7,125.6 102.9,123.6 105.7,121.9 108.9,120.5 112.4,119.5 116.1,118.8 119.9,118.7 123.5,118.9 127.0,119.6" fill="#e6aa8d" stroke="#6a3a24" stroke-width="0.8" stroke-linejoin="round"/><polygon points="215.0,152.6 217.8,153.6 220.2,154.8 222.1,156.3 223.5,157.9 224.3,159.6 224.4,161.3 223.9,163.0 222.8,164.6 182.8,208.8 181.8,209.6 180.7,210.3 179.4,210.9 177.9,211.3 176.3,211.6 174.7,211.7 173.2,211.6 171.8,211.3 69.1,183.5 67.8,183.1 66.7,182.5 65.9,181.7 65.3,180.9 65.1,180.0 65.1,179.0 65.5,178.1 66.1,177.2 107.9,130.8 109.2,129.6 110.8,128.5 112.7,127.7 114.9,127.1 117.1,126.7 119.3,126.6 121.5,126.7 123.6,127.2" fill="none" stroke="#8a5640" stroke-width="0.45" stroke-linejoin="round" stroke-opacity="0.7"/><polygon points="212.3,160.3 214.0,161.0 215.2,162.0 215.8,163.2 215.7,164.5 214.9,165.7 180.8,203.3 179.4,204.4 177.6,205.2 175.5,205.7 173.4,205.8 171.3,205.5 81.7,181.2 80.0,180.5 78.8,179.5 78.3,178.3 78.4,177.0 79.2,175.7 113.4,137.6 114.8,136.5 116.6,135.7 118.7,135.2 120.9,135.1 122.9,135.4" fill="#e9a189" stroke="#6f3f2a" stroke-width="0.7" stroke-linejoin="round"/><polygon points="152.9,142.1 199.2,155.0 162.9,195.0 116.6,182.4" fill="#e3a78b" stroke="#7a4a34" stroke-width="0.5" stroke-linejoin="round"/><polygon points="154.4,144.5 192.0,154.9 161.5,188.6 123.8,178.4" fill="#e7b190" stroke="#5f3722" stroke-width="0.8" stroke-linejoin="round"/><polygon points="155.8,148.5 185.4,156.7 160.1,184.6 130.5,176.6" fill="none" stroke="#5f3722" stroke-width="0.6" stroke-linejoin="round"/><ellipse cx="214.0" cy="160.4" rx="4.8" ry="3.4" fill="#f0b9a6" stroke="#6f3f2a" stroke-width=".6"/><path d="M215.0 163.0q1.500 3.600 8.500 4.600" fill="none" stroke="#6f3f2a" stroke-width=".55"/><path d="M218.2 159.8q3 .4 5.500 3.800" fill="none" stroke="#6f3f2a" stroke-width=".5"/><ellipse cx="175.4" cy="202.5" rx="4.8" ry="3.4" fill="#f0b9a6" stroke="#6f3f2a" stroke-width=".6"/><path d="M176.4 205.1q1.500 3.600 8.500 4.600" fill="none" stroke="#6f3f2a" stroke-width=".55"/><path d="M179.6 201.9q3 .4 5.500 3.800" fill="none" stroke="#6f3f2a" stroke-width=".5"/><polygon points="387.0,191.2 390.0,192.3 392.6,193.7 394.6,195.5 396.0,197.5 396.6,199.6 396.5,201.8 395.7,204.0 394.2,206.1 344.2,260.3 342.7,261.6 340.8,262.8 338.6,263.7 336.1,264.4 333.5,264.9 330.9,265.0 328.3,264.8 325.9,264.3 226.6,237.6 224.4,236.8 222.6,235.8 221.2,234.6 220.3,233.2 219.8,231.7 219.9,230.2 220.5,228.6 221.6,227.2 272.7,171.0 274.7,169.3 277.1,167.8 280.0,166.5 283.2,165.6 286.5,165.1 289.9,164.9 293.2,165.2 296.2,165.8" fill="#e6aa8d" stroke="#6a3a24" stroke-width="0.8" stroke-linejoin="round"/><polygon points="380.8,198.2 382.6,198.9 384.2,199.8 385.4,200.8 386.2,202.0 386.6,203.3 386.5,204.6 386.0,205.9 385.1,207.2 340.7,255.4 339.8,256.2 338.6,256.9 337.3,257.5 335.8,257.9 334.3,258.2 332.7,258.3 331.2,258.1 329.7,257.9 231.6,231.4 230.3,230.9 229.2,230.3 228.3,229.6 227.8,228.7 227.5,227.8 227.6,226.9 227.9,226.0 228.6,225.1 273.8,175.5 274.9,174.5 276.4,173.5 278.1,172.8 280.0,172.3 282.0,171.9 284.1,171.8 286.0,172.0 287.9,172.4" fill="none" stroke="#8a5640" stroke-width="0.45" stroke-linejoin="round" stroke-opacity="0.7"/><polygon points="372.0,204.6 373.7,205.3 374.8,206.3 375.4,207.5 375.3,208.7 374.6,210.0 339.3,248.3 337.9,249.4 336.1,250.2 334.0,250.6 331.9,250.7 329.9,250.4 240.2,226.1 238.5,225.4 237.3,224.4 236.8,223.2 236.9,222.0 237.6,220.7 273.1,181.8 274.5,180.8 276.3,180.0 278.3,179.5 280.5,179.4 282.5,179.8" fill="#e9a189" stroke="#6f3f2a" stroke-width="0.7" stroke-linejoin="round"/><polygon points="292.4,178.9 334.9,190.7 297.0,232.1 254.4,220.5" fill="#e3a78b" stroke="#7a4a34" stroke-width="0.5" stroke-linejoin="round"/><polygon points="293.9,181.2 327.8,190.6 295.5,225.8 261.6,216.6" fill="#e7b190" stroke="#5f3722" stroke-width="0.8" stroke-linejoin="round"/><polygon points="295.2,185.2 321.2,192.4 294.2,221.9 268.2,214.8" fill="none" stroke="#5f3722" stroke-width="0.6" stroke-linejoin="round"/><ellipse cx="277.1" cy="177.6" rx="4.8" ry="3.4" fill="#f0b9a6" stroke="#6f3f2a" stroke-width=".6"/><path d="M278.1 180.2q1.500 3.600 8.500 4.600" fill="none" stroke="#6f3f2a" stroke-width=".55"/><path d="M281.3 177.0q3 .4 5.500 3.800" fill="none" stroke="#6f3f2a" stroke-width=".5"/><ellipse cx="237.8" cy="221.6" rx="4.8" ry="3.4" fill="#f0b9a6" stroke="#6f3f2a" stroke-width=".6"/><path d="M238.8 224.2q1.500 3.600 8.500 4.600" fill="none" stroke="#6f3f2a" stroke-width=".55"/><path d="M242.0 221.0q3 .4 5.500 3.800" fill="none" stroke="#6f3f2a" stroke-width=".5"/><path d="M26.4 204.2v13.0a4.6 2.4 0 0 0 9.2 0v-13.0" fill="#d69c7a" fill-opacity=".6" stroke="#6a3f2a" stroke-width=".6"/><ellipse cx="31.0" cy="204.2" rx="4.6" ry="2.4" fill="#e0a888" stroke="#6a3f2a" stroke-width=".6"/><ellipse cx="31.0" cy="208.2" rx="4.6" ry="2.4" fill="none" stroke="#8a5a44" stroke-width=".4"/><path d="M332.4 289.2v13.0a4.6 2.4 0 0 0 9.2 0v-13.0" fill="#d69c7a" fill-opacity=".6" stroke="#6a3f2a" stroke-width=".6"/><ellipse cx="337.0" cy="289.2" rx="4.6" ry="2.4" fill="#e0a888" stroke="#6a3f2a" stroke-width=".6"/><ellipse cx="337.0" cy="293.2" rx="4.6" ry="2.4" fill="none" stroke="#8a5a44" stroke-width=".4"/><path d="M415.9 197.2v13.0a4.6 2.4 0 0 0 9.2 0v-13.0" fill="#d69c7a" fill-opacity=".6" stroke="#6a3f2a" stroke-width=".6"/><ellipse cx="420.5" cy="197.2" rx="4.6" ry="2.4" fill="#e0a888" stroke="#6a3f2a" stroke-width=".6"/><ellipse cx="420.5" cy="201.2" rx="4.6" ry="2.4" fill="none" stroke="#8a5a44" stroke-width=".4"/><polygon points="128.7,115.6 146.9,120.8 146.9,150.8 128.7,145.6" fill="#d9a07e" stroke="#5a341f" stroke-width="0.6" stroke-linejoin="round" fill-opacity="0.3"/><polygon points="154.3,112.6 146.9,120.8 146.9,150.8 154.3,142.6" fill="#c98e6a" stroke="#5a341f" stroke-width="0.6" stroke-linejoin="round" fill-opacity="0.3"/><polygon points="136.0,107.4 154.3,112.6 146.9,120.8 128.7,115.6" fill="#f4cdb4" stroke="#5a341f" stroke-width="0.6" stroke-linejoin="round" fill-opacity="0.3"/><path d="M96.0 126.7L121.0 133.2" stroke="#7a3a1a" stroke-width=".55"/><path d="M93.7 129.2L118.7 135.8" stroke="#7a3a1a" stroke-width=".55"/><path d="M91.4 131.8L116.4 138.3" stroke="#7a3a1a" stroke-width=".55"/><path d="M89.1 134.4L114.1 140.9" stroke="#7a3a1a" stroke-width=".55"/><path d="M86.8 136.9L111.8 143.4" stroke="#7a3a1a" stroke-width=".55"/><path d="M84.5 139.4L109.5 145.9" stroke="#7a3a1a" stroke-width=".55"/><path d="M82.2 142.0L107.2 148.5" stroke="#7a3a1a" stroke-width=".55"/><path d="M79.9 144.6L104.9 151.1" stroke="#7a3a1a" stroke-width=".55"/><path d="M77.6 147.1L102.6 153.6" stroke="#7a3a1a" stroke-width=".55"/><path d="M75.3 149.6L100.3 156.1" stroke="#7a3a1a" stroke-width=".55"/><path d="M73.0 152.2L98.0 158.7" stroke="#7a3a1a" stroke-width=".55"/><rect x="97.7" y="130.2" width="3.6" height="4" fill="#dc5236" fill-opacity=".65"/><rect x="93.2" y="137.2" width="3.6" height="4" fill="#dc5236" fill-opacity=".65"/><rect x="85.2" y="146.2" width="3.6" height="4" fill="#dc5236" fill-opacity=".65"/><rect x="80.2" y="150.2" width="3.6" height="4" fill="#dc5236" fill-opacity=".65"/><rect x="97.3" y="121.2" width="4.4" height="5.5" fill="#3fc8b0" stroke="#1a7a6a" stroke-width=".4"/><rect x="97.1" y="126.7" width="4.4" height="0.0" fill="#dc5a3c" fill-opacity=".7"/><rect x="67.1" y="151.2" width="4.4" height="6.0" fill="#3fc8b0" stroke="#1a7a6a" stroke-width=".4"/><rect x="66.9" y="157.2" width="4.4" height="10.0" fill="#dc5a3c" fill-opacity=".7"/><polygon points="93.7,115.6 103.3,118.4 103.3,123.9 93.7,121.1" fill="#a678ec" stroke="#2a1a5a" stroke-width="0.6" stroke-linejoin="round"/><polygon points="107.6,113.5 103.3,118.4 103.3,123.9 107.6,119.0" fill="#9460dc" stroke="#2a1a5a" stroke-width="0.6" stroke-linejoin="round"/><polygon points="98.0,110.8 107.6,113.5 103.3,118.4 93.7,115.6" fill="#b78cf6" stroke="#2a1a5a" stroke-width="0.6" stroke-linejoin="round"/><polygon points="80.5,128.4 92.0,131.7 92.0,136.4 80.5,133.1" fill="#a678ec" stroke="#2a1a5a" stroke-width="0.6" stroke-linejoin="round"/><polygon points="96.1,127.1 92.0,131.7 92.0,136.4 96.1,131.8" fill="#9460dc" stroke="#2a1a5a" stroke-width="0.6" stroke-linejoin="round"/><polygon points="84.6,123.8 96.1,127.1 92.0,131.7 80.5,128.4" fill="#b78cf6" stroke="#2a1a5a" stroke-width="0.6" stroke-linejoin="round"/><polygon points="74.9,133.6 86.4,136.9 86.4,141.6 74.9,138.3" fill="#a678ec" stroke="#2a1a5a" stroke-width="0.6" stroke-linejoin="round"/><polygon points="90.5,132.3 86.4,136.9 86.4,141.6 90.5,137.0" fill="#9460dc" stroke="#2a1a5a" stroke-width="0.6" stroke-linejoin="round"/><polygon points="79.0,129.0 90.5,132.3 86.4,136.9 74.9,133.6" fill="#b78cf6" stroke="#2a1a5a" stroke-width="0.6" stroke-linejoin="round"/><polygon points="68.9,139.4 80.4,142.7 80.4,147.4 68.9,144.1" fill="#a678ec" stroke="#2a1a5a" stroke-width="0.6" stroke-linejoin="round"/><polygon points="84.5,138.1 80.4,142.7 80.4,147.4 84.5,142.8" fill="#9460dc" stroke="#2a1a5a" stroke-width="0.6" stroke-linejoin="round"/><polygon points="73.0,134.8 84.5,138.1 80.4,142.7 68.9,139.4" fill="#b78cf6" stroke="#2a1a5a" stroke-width="0.6" stroke-linejoin="round"/><polygon points="60.7,145.8 72.2,149.1 72.2,153.8 60.7,150.5" fill="#a678ec" stroke="#2a1a5a" stroke-width="0.6" stroke-linejoin="round"/><polygon points="76.3,144.5 72.2,149.1 72.2,153.8 76.3,149.2" fill="#9460dc" stroke="#2a1a5a" stroke-width="0.6" stroke-linejoin="round"/><polygon points="64.8,141.2 76.3,144.5 72.2,149.1 60.7,145.8" fill="#b78cf6" stroke="#2a1a5a" stroke-width="0.6" stroke-linejoin="round"/><polygon points="113.4,115.4 129.3,119.9 129.3,124.9 113.4,120.4" fill="#a678ec" stroke="#2a1a5a" stroke-width="0.6" stroke-linejoin="round"/><polygon points="134.3,114.3 129.3,119.9 129.3,124.9 134.3,119.3" fill="#9460dc" stroke="#2a1a5a" stroke-width="0.6" stroke-linejoin="round"/><polygon points="118.4,109.8 134.3,114.3 129.3,119.9 113.4,115.4" fill="#b78cf6" stroke="#2a1a5a" stroke-width="0.6" stroke-linejoin="round"/><polygon points="96.9,156.3 106.5,159.1 106.5,165.1 96.9,162.3" fill="#a678ec" stroke="#2a1a5a" stroke-width="0.6" stroke-linejoin="round"/><polygon points="143.6,117.7 106.5,159.1 106.5,165.1 143.6,123.7" fill="#9460dc" stroke="#2a1a5a" stroke-width="0.6" stroke-linejoin="round"/><polygon points="134.0,115.0 143.6,117.7 106.5,159.1 96.9,156.3" fill="#b78cf6" stroke="#2a1a5a" stroke-width="0.6" stroke-linejoin="round"/><polygon points="72.2,155.0 92.4,160.7 92.4,167.2 72.2,161.5" fill="#a678ec" stroke="#2a1a5a" stroke-width="0.6" stroke-linejoin="round"/><polygon points="97.7,154.7 92.4,160.7 92.4,167.2 97.7,161.2" fill="#9460dc" stroke="#2a1a5a" stroke-width="0.6" stroke-linejoin="round"/><polygon points="77.5,149.0 97.7,154.7 92.4,160.7 72.2,155.0" fill="#b78cf6" stroke="#2a1a5a" stroke-width="0.6" stroke-linejoin="round"/><rect x="122.1" y="113.8" width="1.8" height="1.8" fill="#c9a8ff" stroke="#3a2ad0" stroke-width=".5"/><rect x="134.1" y="120.8" width="1.8" height="1.8" fill="#c9a8ff" stroke="#3a2ad0" stroke-width=".5"/><rect x="126.1" y="128.3" width="1.8" height="1.8" fill="#c9a8ff" stroke="#3a2ad0" stroke-width=".5"/><rect x="117.1" y="138.3" width="1.8" height="1.8" fill="#c9a8ff" stroke="#3a2ad0" stroke-width=".5"/><rect x="108.1" y="148.3" width="1.8" height="1.8" fill="#c9a8ff" stroke="#3a2ad0" stroke-width=".5"/><rect x="101.1" y="157.3" width="1.8" height="1.8" fill="#c9a8ff" stroke="#3a2ad0" stroke-width=".5"/><rect x="86.1" y="154.3" width="1.8" height="1.8" fill="#c9a8ff" stroke="#3a2ad0" stroke-width=".5"/><rect x="78.1" y="149.8" width="1.8" height="1.8" fill="#c9a8ff" stroke="#3a2ad0" stroke-width=".5"/><rect x="88.1" y="128.3" width="1.8" height="1.8" fill="#c9a8ff" stroke="#3a2ad0" stroke-width=".5"/><rect x="83.1" y="133.3" width="1.8" height="1.8" fill="#c9a8ff" stroke="#3a2ad0" stroke-width=".5"/><rect x="76.6" y="139.3" width="1.8" height="1.8" fill="#c9a8ff" stroke="#3a2ad0" stroke-width=".5"/><rect x="69.1" y="146.3" width="1.8" height="1.8" fill="#c9a8ff" stroke="#3a2ad0" stroke-width=".5"/><rect x="101.1" y="113.8" width="1.8" height="1.8" fill="#c9a8ff" stroke="#3a2ad0" stroke-width=".5"/><polygon points="71.6,179.2 89.0,184.1 89.0,220.1 71.6,215.2" fill="#d9a07e" stroke="#5a341f" stroke-width="0.6" stroke-linejoin="round" fill-opacity="0.3"/><polygon points="98.3,173.7 89.0,184.1 89.0,220.1 98.3,209.7" fill="#c98e6a" stroke="#5a341f" stroke-width="0.6" stroke-linejoin="round" fill-opacity="0.3"/><polygon points="81.0,168.8 98.3,173.7 89.0,184.1 71.6,179.2" fill="#f4cdb4" stroke="#5a341f" stroke-width="0.6" stroke-linejoin="round" fill-opacity="0.3"/><polygon points="356.7,178.6 374.9,183.8 374.9,211.8 356.7,206.6" fill="#d9a07e" stroke="#5a341f" stroke-width="0.6" stroke-linejoin="round" fill-opacity="0.3"/><polygon points="382.3,175.6 374.9,183.8 374.9,211.8 382.3,203.6" fill="#c98e6a" stroke="#5a341f" stroke-width="0.6" stroke-linejoin="round" fill-opacity="0.3"/><polygon points="364.0,170.4 382.3,175.6 374.9,183.8 356.7,178.6" fill="#f4cdb4" stroke="#5a341f" stroke-width="0.6" stroke-linejoin="round" fill-opacity="0.3"/><path d="M357.0 186.2L379.0 192.4" stroke="#7a3a1a" stroke-width=".55"/><path d="M354.4 189.1L376.4 195.3" stroke="#7a3a1a" stroke-width=".55"/><path d="M351.8 192.0L373.8 198.2" stroke="#7a3a1a" stroke-width=".55"/><path d="M349.2 194.9L371.2 201.1" stroke="#7a3a1a" stroke-width=".55"/><path d="M346.6 197.8L368.6 204.0" stroke="#7a3a1a" stroke-width=".55"/><path d="M344.0 200.7L366.0 206.9" stroke="#7a3a1a" stroke-width=".55"/><path d="M341.4 203.6L363.4 209.8" stroke="#7a3a1a" stroke-width=".55"/><path d="M338.8 206.5L360.8 212.7" stroke="#7a3a1a" stroke-width=".55"/><path d="M336.2 209.4L358.2 215.6" stroke="#7a3a1a" stroke-width=".55"/><path d="M333.6 212.3L355.6 218.5" stroke="#7a3a1a" stroke-width=".55"/><path d="M331.0 215.2L353.0 221.4" stroke="#7a3a1a" stroke-width=".55"/><rect x="382.8" y="199.7" width="4.4" height="3.5" fill="#3fc8b0" stroke="#1a7a6a" stroke-width=".4"/><rect x="382.6" y="203.2" width="4.4" height="8.0" fill="#dc5a3c" fill-opacity=".7"/><rect x="374.8" y="206.7" width="4.4" height="3.5" fill="#3fc8b0" stroke="#1a7a6a" stroke-width=".4"/><rect x="374.6" y="210.2" width="4.4" height="9.0" fill="#dc5a3c" fill-opacity=".7"/><rect x="369.3" y="212.7" width="4.4" height="3.5" fill="#3fc8b0" stroke="#1a7a6a" stroke-width=".4"/><rect x="369.1" y="216.2" width="4.4" height="10.0" fill="#dc5a3c" fill-opacity=".7"/><rect x="364.3" y="217.7" width="4.4" height="3.5" fill="#3fc8b0" stroke="#1a7a6a" stroke-width=".4"/><rect x="364.1" y="221.2" width="4.4" height="11.0" fill="#dc5a3c" fill-opacity=".7"/><rect x="349.3" y="230.8" width="4.4" height="4.0" fill="#3fc8b0" stroke="#1a7a6a" stroke-width=".4"/><rect x="349.1" y="234.8" width="4.4" height="13.0" fill="#dc5a3c" fill-opacity=".7"/><polygon points="309.9,218.3 320.0,221.1 320.0,227.1 309.9,224.3" fill="#a678ec" stroke="#2a1a5a" stroke-width="0.6" stroke-linejoin="round"/><polygon points="358.1,178.7 320.0,221.1 320.0,227.1 358.1,184.7" fill="#9460dc" stroke="#2a1a5a" stroke-width="0.6" stroke-linejoin="round"/><polygon points="348.0,175.8 358.1,178.7 320.0,221.1 309.9,218.3" fill="#b78cf6" stroke="#2a1a5a" stroke-width="0.6" stroke-linejoin="round"/><polygon points="352.8,184.7 373.0,190.4 373.0,195.4 352.8,189.7" fill="#a678ec" stroke="#2a1a5a" stroke-width="0.6" stroke-linejoin="round"/><polygon points="378.3,184.4 373.0,190.4 373.0,195.4 378.3,189.4" fill="#9460dc" stroke="#2a1a5a" stroke-width="0.6" stroke-linejoin="round"/><polygon points="358.1,178.7 378.3,184.4 373.0,190.4 352.8,184.7" fill="#b78cf6" stroke="#2a1a5a" stroke-width="0.6" stroke-linejoin="round"/><polygon points="314.9,226.4 334.6,231.9 334.6,237.9 314.9,232.4" fill="#a678ec" stroke="#2a1a5a" stroke-width="0.6" stroke-linejoin="round"/><polygon points="339.9,226.0 334.6,231.9 334.6,237.9 339.9,232.0" fill="#9460dc" stroke="#2a1a5a" stroke-width="0.6" stroke-linejoin="round"/><polygon points="320.2,220.4 339.9,226.0 334.6,231.9 314.9,226.4" fill="#b78cf6" stroke="#2a1a5a" stroke-width="0.6" stroke-linejoin="round"/><polygon points="374.9,194.4 385.9,197.6 385.9,202.4 374.9,199.2" fill="#a678ec" stroke="#2a1a5a" stroke-width="0.6" stroke-linejoin="round"/><polygon points="390.3,192.7 385.9,197.6 385.9,202.4 390.3,197.5" fill="#9460dc" stroke="#2a1a5a" stroke-width="0.6" stroke-linejoin="round"/><polygon points="379.2,189.6 390.3,192.7 385.9,197.6 374.9,194.4" fill="#b78cf6" stroke="#2a1a5a" stroke-width="0.6" stroke-linejoin="round"/><polygon points="366.7,201.2 377.7,204.4 377.7,209.2 366.7,206.0" fill="#a678ec" stroke="#2a1a5a" stroke-width="0.6" stroke-linejoin="round"/><polygon points="382.1,199.5 377.7,204.4 377.7,209.2 382.1,204.3" fill="#9460dc" stroke="#2a1a5a" stroke-width="0.6" stroke-linejoin="round"/><polygon points="371.0,196.4 382.1,199.5 377.7,204.4 366.7,201.2" fill="#b78cf6" stroke="#2a1a5a" stroke-width="0.6" stroke-linejoin="round"/><polygon points="361.1,207.4 372.1,210.6 372.1,215.4 361.1,212.2" fill="#a678ec" stroke="#2a1a5a" stroke-width="0.6" stroke-linejoin="round"/><polygon points="376.5,205.7 372.1,210.6 372.1,215.4 376.5,210.5" fill="#9460dc" stroke="#2a1a5a" stroke-width="0.6" stroke-linejoin="round"/><polygon points="365.4,202.6 376.5,205.7 372.1,210.6 361.1,207.4" fill="#b78cf6" stroke="#2a1a5a" stroke-width="0.6" stroke-linejoin="round"/><polygon points="356.3,212.4 367.3,215.6 367.3,220.4 356.3,217.2" fill="#a678ec" stroke="#2a1a5a" stroke-width="0.6" stroke-linejoin="round"/><polygon points="371.7,210.7 367.3,215.6 367.3,220.4 371.7,215.5" fill="#9460dc" stroke="#2a1a5a" stroke-width="0.6" stroke-linejoin="round"/><polygon points="360.6,207.6 371.7,210.7 367.3,215.6 356.3,212.4" fill="#b78cf6" stroke="#2a1a5a" stroke-width="0.6" stroke-linejoin="round"/><polygon points="344.3,226.0 354.9,229.0 354.9,234.0 344.3,231.0" fill="#a678ec" stroke="#2a1a5a" stroke-width="0.6" stroke-linejoin="round"/><polygon points="359.6,223.8 354.9,229.0 354.9,234.0 359.6,228.8" fill="#9460dc" stroke="#2a1a5a" stroke-width="0.6" stroke-linejoin="round"/><polygon points="349.0,220.8 359.6,223.8 354.9,229.0 344.3,226.0" fill="#b78cf6" stroke="#2a1a5a" stroke-width="0.6" stroke-linejoin="round"/><rect x="352.1" y="179.8" width="1.8" height="1.8" fill="#c9a8ff" stroke="#3a2ad0" stroke-width=".5"/><rect x="362.1" y="184.3" width="1.8" height="1.8" fill="#c9a8ff" stroke="#3a2ad0" stroke-width=".5"/><rect x="372.1" y="187.3" width="1.8" height="1.8" fill="#c9a8ff" stroke="#3a2ad0" stroke-width=".5"/><rect x="342.6" y="189.3" width="1.8" height="1.8" fill="#c9a8ff" stroke="#3a2ad0" stroke-width=".5"/><rect x="335.1" y="197.8" width="1.8" height="1.8" fill="#c9a8ff" stroke="#3a2ad0" stroke-width=".5"/><rect x="327.6" y="206.3" width="1.8" height="1.8" fill="#c9a8ff" stroke="#3a2ad0" stroke-width=".5"/><rect x="319.6" y="216.3" width="1.8" height="1.8" fill="#c9a8ff" stroke="#3a2ad0" stroke-width=".5"/><rect x="329.1" y="225.3" width="1.8" height="1.8" fill="#c9a8ff" stroke="#3a2ad0" stroke-width=".5"/><rect x="382.1" y="193.3" width="1.8" height="1.8" fill="#c9a8ff" stroke="#3a2ad0" stroke-width=".5"/><rect x="375.1" y="199.8" width="1.8" height="1.8" fill="#c9a8ff" stroke="#3a2ad0" stroke-width=".5"/><rect x="368.1" y="206.3" width="1.8" height="1.8" fill="#c9a8ff" stroke="#3a2ad0" stroke-width=".5"/><rect x="361.6" y="212.8" width="1.8" height="1.8" fill="#c9a8ff" stroke="#3a2ad0" stroke-width=".5"/><rect x="351.1" y="226.3" width="1.8" height="1.8" fill="#c9a8ff" stroke="#3a2ad0" stroke-width=".5"/><polygon points="299.3,242.8 318.1,248.1 318.1,284.1 299.3,278.8" fill="#d9a07e" stroke="#5a341f" stroke-width="0.6" stroke-linejoin="round" fill-opacity="0.3"/><polygon points="327.5,237.7 318.1,248.1 318.1,284.1 327.5,273.7" fill="#c98e6a" stroke="#5a341f" stroke-width="0.6" stroke-linejoin="round" fill-opacity="0.3"/><polygon points="308.7,232.4 327.5,237.7 318.1,248.1 299.3,242.8" fill="#f4cdb4" stroke="#5a341f" stroke-width="0.6" stroke-linejoin="round" fill-opacity="0.3"/><path d="M36.1 352.9L36.1 341.9" stroke="#555" stroke-width=".7"/><path d="M36.1 333.9L38.1 341.9L34.1 341.9z" fill="#fff" stroke="#555" stroke-width=".6"/><text x="34.2" y="327.5" font-size="6.6" fill="#777">Z</text><path d="M36.1 352.9L42.4 346.4" stroke="#555" stroke-width=".7"/><path d="M48.0 340.7L43.8 347.8L41.0 345.0z" fill="#fff" stroke="#555" stroke-width=".6"/><text x="49.0" y="337.6" font-size="6.6" fill="#777">Y</text><path d="M36.1 352.9L49.5 356.9" stroke="#555" stroke-width=".7"/><path d="M57.2 359.2L48.9 358.8L50.1 355.0z" fill="#fff" stroke="#555" stroke-width=".6"/><text x="62.2" y="361.4" font-size="6.6" fill="#777">X</text><circle cx="36.1" cy="352.9" r="1.6" fill="#fff" stroke="#555" stroke-width=".6"/></svg></div>
<div class="rtoolbar" style="left:579.5px;top:65px;width:42.5px;height:291px;background:linear-gradient(90deg,#dde8f9 0,#cddcf4 30%,#b4caec 65%,#8eaede 100%);border-radius:0 0 0 2px;"><svg width="42.5" height="291" style="left:0;top:0"><rect x="3.5" y="2.2" width="1.200" height="1.200" fill="#1f3468"/><rect x="4.1" y="3.000" width=".8" height=".8" fill="#fff" opacity=".6"/><rect x="5.9" y="2.2" width="1.200" height="1.200" fill="#1f3468"/><rect x="6.5" y="3.000" width=".8" height=".8" fill="#fff" opacity=".6"/><rect x="8.3" y="2.2" width="1.200" height="1.200" fill="#1f3468"/><rect x="8.9" y="3.000" width=".8" height=".8" fill="#fff" opacity=".6"/><rect x="10.8" y="2.2" width="1.200" height="1.200" fill="#1f3468"/><rect x="11.4" y="3.000" width=".8" height=".8" fill="#fff" opacity=".6"/><rect x="13.2" y="2.2" width="1.200" height="1.200" fill="#1f3468"/><rect x="13.8" y="3.000" width=".8" height=".8" fill="#fff" opacity=".6"/><rect x="15.6" y="2.2" width="1.200" height="1.200" fill="#1f3468"/><rect x="16.2" y="3.000" width=".8" height=".8" fill="#fff" opacity=".6"/><rect x="18.0" y="2.2" width="1.200" height="1.200" fill="#1f3468"/><rect x="18.6" y="3.000" width=".8" height=".8" fill="#fff" opacity=".6"/><rect x="20.4" y="2.2" width="1.200" height="1.200" fill="#1f3468"/><rect x="21.0" y="3.000" width=".8" height=".8" fill="#fff" opacity=".6"/><rect x="22.9" y="2.2" width="1.200" height="1.200" fill="#1f3468"/><rect x="23.5" y="3.000" width=".8" height=".8" fill="#fff" opacity=".6"/><rect x="25.3" y="2.2" width="1.200" height="1.200" fill="#1f3468"/><rect x="25.9" y="3.000" width=".8" height=".8" fill="#fff" opacity=".6"/><rect x="27.7" y="2.2" width="1.200" height="1.200" fill="#1f3468"/><rect x="28.3" y="3.000" width=".8" height=".8" fill="#fff" opacity=".6"/><rect x="30.1" y="2.2" width="1.200" height="1.200" fill="#1f3468"/><rect x="30.7" y="3.000" width=".8" height=".8" fill="#fff" opacity=".6"/><rect x="32.5" y="2.2" width="1.200" height="1.200" fill="#1f3468"/><rect x="33.1" y="3.000" width=".8" height=".8" fill="#fff" opacity=".6"/><rect x="35.0" y="2.2" width="1.200" height="1.200" fill="#1f3468"/><rect x="35.6" y="3.000" width=".8" height=".8" fill="#fff" opacity=".6"/><rect x="37.4" y="2.2" width="1.200" height="1.200" fill="#1f3468"/><rect x="38.0" y="3.000" width=".8" height=".8" fill="#fff" opacity=".6"/><g transform="translate(21.1 12.1)"><path d="M-2.4 -3.6a3 3 0 0 1 4 3.4l-1.2 2.2h-2.6l-1.4-2.4a3 3 0 0 1 1.2-3.2z" fill="#2a2418" stroke="#111" stroke-width=".5"/><path d="M1 -4.6l4.6-1-1.2 2.2 2 1.6-3.6.2z" fill="#ffd21a" stroke="#b07a00" stroke-width=".4"/><rect x="-1.8" y="2" width="2.8" height="2.4" fill="#6a5a2a"/><path d="M-1.6 -1.6l1.6 1.4" stroke="#e8c23a" stroke-width=".8"/></g><text x="6.6" y="24" font-size="7.1" fill="#0a1020">提取电极</text><g transform="translate(21.1 35.8)"><path d="M-4 -3.4h6.4l1.8 1.8v5h-6.4l-1.8-1.8z" fill="none" stroke="#8595b2" stroke-width=".8"/><rect x="-2" y="-1" width="4.6" height="3.4" fill="none" stroke="#8595b2" stroke-width=".7"/></g><text x="13.7" y="47.72" font-size="7.1" fill="#8494b0">坯料</text><g transform="translate(21.1 59.5)"><path d="M-3.4 -3.6v4.4h3M-3.4 -3.6l-1 1.6M-3.4 -3.6l1 1.6M1 1.2l3 2.4M1.2 -1a2.4 2.4 0 0 1 3 1.4" fill="none" stroke="#8595b2" stroke-width=".8"/><circle cx="-1" cy="2.6" r="1" fill="#8595b2"/></g><text x="10.15" y="71.44" font-size="7.1" fill="#8494b0">坐标系</text><g transform="translate(21.1 83.3)"><path d="M-1.2 -4.4h2.4v5.4h-2.4zM-2.6 1h5.2v2.8h-5.2z" fill="#dfe8f6" stroke="#8595b2" stroke-width=".8"/></g><text x="13.7" y="95.16" font-size="7.1" fill="#8494b0">夹头</text><g transform="translate(21.1 107.0)"><path d="M-4 3.2l1.4-6 2.8 2 3-2.4 1 6.2c-2-1.4-3-1.4-4 0-1.400-1.200-2.600-1.200-4.200.2z" fill="none" stroke="#8595b2" stroke-width=".8"/></g><text x="6.6" y="118.88" font-size="7.1" fill="#8494b0">组合曲线</text><g transform="translate(21.1 130.7)"><path d="M-4 3.4l.6-4.600 3.200-2.600 3.600 2.400.8 4.800c-1.800-1-3-1-4.200 0-1.200-.8-2.400-.8-4 0z" fill="none" stroke="#8595b2" stroke-width=".8"/><path d="M-1 -1.400h2.400" stroke="#8595b2" stroke-width=".7"/></g><text x="6.6" y="142.6" font-size="7.1" fill="#8494b0">自动轮廓</text><g transform="translate(21.1 154.4)"><path d="M-4 -2.600l5-1.400 3.400 3.400-1.800 4.200-4.400-.6z" fill="#e4ecf8" stroke="#8595b2" stroke-width=".8"/><path d="M-1 -1l3 3" stroke="#8595b2" stroke-width=".7"/></g><text x="13.7" y="166.32" font-size="7.1" fill="#8494b0">延伸</text><g transform="translate(21.1 178.1)"><path d="M-5 1.600l4.400-5.400 4.400 3.600v4.400h-8.800z" fill="#1f2fc0" stroke="#0a1470" stroke-width=".5"/><path d="M-2.600 0l2-2.600 2.600 2z" fill="#3a56f0"/><path d="M5.200 -3.200l1.800-.8" stroke="#111" stroke-width=".7"/></g><text x="6.6" y="190.04" font-size="7.1" fill="#0a1020">应用模板</text><g transform="translate(21.1 201.9)"><circle cx="-.4" cy="-1" r="3.200" fill="#e9e9e9" stroke="#222" stroke-width="1"/><path d="M1.800 1.400l3 3" stroke="#222" stroke-width="1.500"/><path d="M-2.200 -1.600h3.600" stroke="#b03020" stroke-width=".9"/><path d="M-3.600 3.800h4" stroke="#2a8a2a" stroke-width=".9"/></g><text x="9.30" y="213.62" font-size="7.46" fill="#0a1020" textLength="8.6" lengthAdjust="spacingAndGlyphs">3D</text><text x="18.1" y="213.76" font-size="7.1" fill="#0a1020">轨迹</text><g transform="translate(21.1 225.6)"><path d="M-4.400 3.600v-5M-4.400 3.600h6.500" stroke="#1a7a2a" stroke-width=".9"/><path d="M-1.800 -1l3.400-2.800 2.600 2.200-3 2.800z" fill="#d02a7a" stroke="#7a0a40" stroke-width=".4"/><rect x="-3.600" y="-3.800" width="2" height="2" fill="#d0a010"/><circle cx="3" cy="3" r="1.100" fill="#2a3ad0"/></g><text x="13.7" y="237.48" font-size="7.1" fill="#0a1020">模拟</text><g transform="translate(21.1 249.3)"><path d="M-3.800 2.400a2 2 0 1 1 2.400-2.800M0 -2.800l2-1.600 2 1.600-2 1.600z" fill="none" stroke="#8595b2" stroke-width=".8"/><circle cx="2.400" cy="2.600" r="1.300" fill="none" stroke="#8595b2" stroke-width=".7"/></g><text x="3.05" y="261.2" font-size="7.1" fill="#8494b0">激活主装配</text><g transform="translate(21.1 273.0)"><path d="M-3 -3.400a3 3 0 0 1 4.400 3.200l-1.200 2.200h-2.600l-1.400-2.400a3 3 0 0 1 .8-3z" fill="#3a2a1a" stroke="#111" stroke-width=".5"/><path d="M-.6 1.600l1.800 2.200 4-5.600" fill="none" stroke="#18a018" stroke-width="1.600"/><rect x="-2.400" y="2.600" width="2.600" height="2" fill="#6a5a2a"/></g><text x="6.6" y="284.92" font-size="7.1" fill="#0a1020">激活电极</text></svg></div>
<div class="vgap" style="left:578.4px;top:64px;width:1.2px;height:402.5px;background:#eef2f8;"></div>
<svg class="toolicons" width="624" height="34" style="left:0;top:31px" viewBox="0 31 624 34"><g transform="translate(15.4 40.2) scale(.9)"><path d="M-3.6 -4.8h5l2.400 2.400v7.200h-7.400z" fill="#fff" stroke="#222" stroke-width=".8"/><path d="M1.400 -4.800v2.400h2.400" fill="#ddd" stroke="#222" stroke-width=".6"/></g><g transform="translate(29.0 40.2) scale(.9)"><path d="M-4.800 4.200v-7h3l1 1.200h4.400v1.600" fill="#c8a800" stroke="#3a3000" stroke-width=".7"/><path d="M-4.800 4.200l2-4.800h8.200l-2 4.800z" fill="#f2e24a" stroke="#3a3000" stroke-width=".7"/><path d="M1.600 -3.600c1.400-1.600 2.800-1.400 3.400-.4" fill="none" stroke="#222" stroke-width=".7"/></g><g transform="translate(42.4 40.2) scale(.9)"><rect x="-4.400" y="-4.600" width="8.800" height="9.200" fill="#1c1c10" stroke="#000" stroke-width=".5"/><rect x="-2.800" y="-4.200" width="5.600" height="3.600" fill="#7a8a2a"/><rect x="-2.400" y="1.200" width="4.800" height="3.400" fill="#d8d8d0"/><rect x=".4" y="1.800" width="1.400" height="2.200" fill="#222"/></g><g transform="translate(63.0 40.2) scale(.9)"><path d="M-3.800 -.6c1-4 7-4.200 7.800 0 .3 1.500-.4 2.600-1.200 3.200" fill="none" stroke="#1a2238" stroke-width="1.300"/><path d="M-5.600 -2.200l1.400 3.800 3-2.600z" fill="#1a2238"/><rect x="-4.800" y="3.200" width="5.600" height="1.500" fill="#1a2238"/></g><path d="M70.6 40.2h3.6l-1.800 2z" fill="#111"/><g transform="translate(83.0 40.2) scale(.9)"><path d="M3.800 -.6c-1-4-7-4.200-7.800 0-.3 1.500.4 2.600 1.200 3.200" fill="none" stroke="#8ea3c8" stroke-width="1.200"/><path d="M5.600 -2.200l-1.400 3.800-3-2.600z" fill="#8ea3c8"/><rect x="-.8" y="3.200" width="5.600" height="1.400" fill="#8ea3c8"/></g><path d="M90.6 40.2h3.6l-1.800 2z" fill="#8ea3c8"/><g transform="translate(103.0 40.2) scale(.9)"><ellipse cx="-2.600" cy="0" rx="2.600" ry="2.800" fill="#dfe8ff" stroke="#1a2a6a" stroke-width="1.300"/><ellipse cx="2.600" cy="0" rx="2.600" ry="2.800" fill="#dfe8ff" stroke="#1a2a6a" stroke-width="1.300"/><path d="M-1.600 0h3.200" stroke="#1a2a6a" stroke-width="1.200"/></g><g transform="translate(117.0 40.2) scale(.9)"><rect x="-4.800" y="-4.600" width="4" height="3.600" fill="#1a1a1a"/><rect x="1" y="-4.200" width="3.800" height="3.200" fill="#fff" stroke="#1a1a1a" stroke-width=".7"/><rect x="-4.400" y="1" width="3.800" height="3.400" fill="#fff" stroke="#1a1a1a" stroke-width=".7"/><rect x="1" y="1" width="4" height="3.600" fill="#2a5ad0" stroke="#1a1a1a" stroke-width=".6"/><path d="M-.8 -2.800h1.800M-2.600 -1v2" stroke="#1a1a1a" stroke-width=".7"/></g><g transform="translate(130.6 40.2) scale(.9)"><circle cx="-3" cy="-3" r="1.700" fill="#fff" stroke="#1a1a1a" stroke-width=".8"/><circle cx="-3" cy="3" r="1.700" fill="#fff" stroke="#1a1a1a" stroke-width=".8"/><path d="M-3 -1.300v2.600" stroke="#1a1a1a" stroke-width=".8"/><rect x="0" y="-4.600" width="4.800" height="4" fill="#cfd8ea" stroke="#1a1a1a" stroke-width=".7"/><rect x="0" y=".8" width="4.800" height="3.800" fill="#2a5ad0" stroke="#1a1a1a" stroke-width=".6"/></g><g transform="translate(151.5 40.2) scale(.9)"><rect x="-5" y="-4.800" width="10" height="9.600" fill="#2a7a2a" stroke="#10204a" stroke-width="1"/><rect x="-5" y="-4.800" width="10" height="2.200" fill="#10204a"/><rect x="-2" y="-1" width="4" height="3.600" fill="#dff0d0" stroke="#0a3a0a" stroke-width=".6"/></g><g transform="translate(164.5 40.2) scale(.9)"><circle cx="-.8" cy="-.8" r="3.600" fill="#e6f3da" stroke="#10300a" stroke-width="1.200"/><path d="M1.800 1.800l3.400 3.400" stroke="#10300a" stroke-width="1.800"/><rect x="-2.600" y="-2.400" width="3.600" height="3.200" fill="#3a9a2a" stroke="#0a3a0a" stroke-width=".5"/><path d="M-5 -4.400h3M-5 -4.400v3" stroke="#10300a" stroke-width="1"/></g><g transform="translate(177.5 40.2) scale(.9)"><circle cx="-.8" cy="-.8" r="3.600" fill="#e6f3da" stroke="#10300a" stroke-width="1.200"/><path d="M1.800 1.800l3.400 3.400" stroke="#10300a" stroke-width="1.800"/><path d="M-3 -3l4.400 4.400M1.400 -3l-4.400 4.400" stroke="#2a8a1a" stroke-width="1.100"/><path d="M-5 -4.400h3M-5 -4.400v3M4 -4.400h-2" stroke="#10300a" stroke-width="1"/></g><g transform="translate(190.5 40.2) scale(.9)"><circle cx="-.8" cy="-.8" r="3.400" fill="#f4f6fa" stroke="#141a2a" stroke-width="1.200"/><path d="M1.800 1.800l3.400 3.400" stroke="#141a2a" stroke-width="1.800"/></g><g transform="translate(204.2 40.2) scale(.9)"><path d="M0 -5.400l2 2.400h-1.300v2.300h2.300v-1.300l2.400 2-2.400 2v-1.300h-2.300v2.300h1.300l-2 2.400-2-2.400h1.300v-2.300h-2.300v1.300l-2.400-2 2.400-2v1.300h2.300v-2.300h-1.300z" fill="#141a2a"/></g><g transform="translate(218.0 40.2) scale(.9)"><circle r="3.800" fill="none" stroke="#141a2a" stroke-width="1" stroke-dasharray="3.200 1.400"/><path d="M0 -5.600l1.600 2h-3.200zM0 5.600l1.600-2h-3.200zM-5.600 0l2-1.600v3.200zM5.600 0l-2-1.600v3.200z" fill="#141a2a"/><circle r="1.300" fill="#fff" stroke="#141a2a" stroke-width=".6"/></g><rect x="226.2" y="34.7" width=".8" height="11" fill="#8aa6d6"/><rect x="227.0" y="34.7" width=".7" height="11" fill="#eef4fd"/><g transform="translate(235.6 40.2) scale(.9)"><path d="M-4.800 -2.200l2.600-2.400h7v6.800l-2.600 2.600h-7z" fill="#b03a90" stroke="#3a1238" stroke-width=".9"/><path d="M-4.800 -2.200h7v7h-7z" fill="#8a1a6a" stroke="#3a1238" stroke-width=".9"/><path d="M2.200 -2.200l2.600-2.400v6.800l-2.600 2.600z" fill="#6a0a50" stroke="#3a1238" stroke-width=".9"/></g><g transform="translate(249.0 40.2) scale(.9)"><path d="M-4.800 -2.200l2.600-2.400h7v6.800l-2.600 2.600h-7z" fill="#fff" stroke="#3a1238" stroke-width=".9"/><path d="M-4.800 -2.200h7v7h-7z" fill="#fff" stroke="#3a1238" stroke-width=".9"/><path d="M2.200 -2.200l2.600-2.400v6.800l-2.600 2.600z" fill="#c9a0c0" stroke="#3a1238" stroke-width=".9"/></g><g transform="translate(262.2 40.2) scale(.9)"><path d="M-4.800 -2.200l2.600-2.400h7v6.800l-2.600 2.600h-7z" fill="#fff" stroke="#3a1238" stroke-width=".9"/><path d="M-4.800 -2.200h7v7h-7z" fill="#8a1a6a" stroke="#3a1238" stroke-width=".9"/><path d="M2.200 -2.200l2.600-2.400v6.800l-2.600 2.600z" fill="#fff" stroke="#3a1238" stroke-width=".9"/></g><g transform="translate(275.4 40.2) scale(.9)"><path d="M-4.800 -2.200l2.600-2.400h7v6.800l-2.600 2.600h-7z" fill="#fff" stroke="#3a1238" stroke-width=".9"/><path d="M-4.800 -2.200h7v7h-7z" fill="#fff" stroke="#3a1238" stroke-width=".9"/><path d="M2.200 -2.200l2.600-2.400v6.800l-2.600 2.600z" fill="#8a1a6a" stroke="#3a1238" stroke-width=".9"/></g><g transform="translate(288.4 40.2) scale(.9)"><path d="M-4.800 -2.200l2.600-2.400h7v6.800l-2.600 2.600h-7z" fill="#8a1a6a" stroke="#3a1238" stroke-width=".9"/><path d="M-4.800 -2.200h7v7h-7z" fill="#fff" stroke="#3a1238" stroke-width=".9"/><path d="M2.200 -2.200l2.600-2.400v6.800l-2.600 2.600z" fill="#fff" stroke="#3a1238" stroke-width=".9"/></g><g transform="translate(301.6 40.2) scale(.9)"><path d="M-4.800 -2.200l2.600-2.400h7v6.800l-2.600 2.600h-7z" fill="#fff" stroke="#3a1238" stroke-width=".9"/><path d="M-4.800 -2.200h7v7h-7z" fill="#8a1a6a" stroke="#3a1238" stroke-width=".9"/><path d="M2.200 -2.200l2.600-2.400v6.800l-2.600 2.600z" fill="#c9a0c0" stroke="#3a1238" stroke-width=".9"/></g><g transform="translate(314.8 40.2) scale(.9)"><path d="M-4.800 -2.200l2.600-2.400h7v6.800l-2.600 2.600h-7z" fill="#fff" stroke="#3a1238" stroke-width=".9"/><path d="M-4.800 -2.200h7v7h-7z" fill="#c9a0c0" stroke="#3a1238" stroke-width=".9"/><path d="M2.200 -2.200l2.600-2.400v6.800l-2.600 2.600z" fill="#8a1a6a" stroke="#3a1238" stroke-width=".9"/></g><rect x="322.6" y="34.7" width=".8" height="11" fill="#8aa6d6"/><rect x="323.4" y="34.7" width=".7" height="11" fill="#eef4fd"/><g transform="translate(333.4 40.2) scale(.9)"><rect x="-5" y="-.6" width="6" height="5" fill="#5a2a6a" stroke="#1a0a2a" stroke-width=".6"/><path d="M-3.600 -.6v-1.600a1.800 1.800 0 0 1 3.600 0v1.600" fill="none" stroke="#1a1a2a" stroke-width="1"/><rect x="0" y="-4.600" width="5" height="4.400" fill="#e8e0f0" stroke="#1a0a2a" stroke-width=".7"/><rect x="1.200" y="1" width="3.800" height="3.600" fill="#c8b8d8" stroke="#1a0a2a" stroke-width=".5"/></g><g transform="translate(348.0 40.2) scale(.9)"><rect x="-5" y="-.6" width="6" height="5" fill="#5a2a6a" stroke="#1a0a2a" stroke-width=".6"/><path d="M-3.600 -.6v-1.600a1.800 1.800 0 0 1 3.600 0v.6" fill="none" stroke="#1a1a2a" stroke-width="1"/><rect x="0" y="-4.600" width="5" height="4.400" fill="#e8e0f0" stroke="#1a0a2a" stroke-width=".7"/><rect x="1.200" y="1" width="3.800" height="3.600" fill="#c8b8d8" stroke="#1a0a2a" stroke-width=".5"/></g><rect x="356.8" y="33.3" width="13.4" height="12.6" fill="#f6b55f" stroke="#2b2868" stroke-width="1"/><g transform="translate(363.6 40.2) scale(.9)"><path d="M-4.800 -2.200l2.600-2.400h7v6.800l-2.600 2.600h-7z" fill="#ffd6e6" stroke="#a02a5a" stroke-width=".9"/><path d="M-4.800 -2.200h7v7h-7z" fill="#fff0f4" stroke="#a02a5a" stroke-width=".9"/><path d="M2.200 -2.200l2.600-2.400v6.800l-2.600 2.600z" fill="#f29ab8" stroke="#a02a5a" stroke-width=".9"/></g><g transform="translate(377.4 40.2) scale(.9)"><path d="M-4.800 -2.400l2-2h7.600v7l-2 2.200h-7.600z" fill="#e8e6c0" stroke="#2a2a10" stroke-width=".8"/><path d="M-3 3v-4.600l1.800 2 1.800-2v4.600M2 3v-4.600" fill="none" stroke="#5a6a10" stroke-width="1.100"/></g><g transform="translate(391.0 40.2) scale(.9)"><path d="M-5 -1.200l2.400-2.800h7.400v3l-2.400 2.600h-7.400z" fill="#c8b89a" stroke="#4a3a2a" stroke-width=".7"/><path d="M-5 1.800h7.400l2.400-2.400v3l-2.400 2.400h-7.400z" fill="#a8987a" stroke="#4a3a2a" stroke-width=".7"/></g><path d="M397.8 40.2h3.6l-1.8 2z" fill="#111"/><g transform="translate(410.0 40.2) scale(.9)"><path d="M-5 -2.400l2-2.200h7v6.400l-2 2.400h-7z" fill="#d8c8a8" stroke="#4a3a2a" stroke-width=".8"/><rect x="-3.400" y="-1" width="4" height="3.200" fill="#fff" stroke="#4a3a2a" stroke-width=".6"/><circle cx="1.600" cy="1.600" r="2" fill="#e6eefa" stroke="#141a2a" stroke-width=".9"/><path d="M3 3.200l2.200 2.200" stroke="#141a2a" stroke-width="1.400"/></g><path d="M417.8 40.2h3.6l-1.800 2z" fill="#111"/><g transform="translate(437.6 40.2) scale(.9)"><path d="M0 -5a3.600 3.600 0 0 1 3.600 3.600c0 1.700-1.200 2.300-1.500 3.600h-4.200c-.3-1.300-1.500-1.900-1.500-3.600a3.600 3.600 0 0 1 3.600-3.600z" fill="#8a8a86" stroke="#2a2a2a" stroke-width=".9"/><rect x="-1.700" y="2.400" width="3.400" height="2.600" fill="#2a2a2a"/></g><g transform="translate(451.0 40.2) scale(.9)"><path d="M0 -5a3.600 3.600 0 0 1 3.600 3.600c0 1.700-1.200 2.300-1.500 3.600h-4.200c-.3-1.300-1.500-1.900-1.500-3.600a3.600 3.600 0 0 1 3.600-3.600z" fill="#f4ea20" stroke="#4a4400" stroke-width=".9"/><rect x="-1.700" y="2.400" width="3.400" height="2.600" fill="#4a4400"/></g><g transform="translate(465.0 40.2) scale(.9)" opacity="0.9"><path d="M0 -5a3.600 3.600 0 0 1 3.600 3.600c0 1.700-1.200 2.300-1.500 3.600h-4.200c-.3-1.300-1.500-1.900-1.500-3.600a3.600 3.600 0 0 1 3.600-3.600z" fill="#dbe6f6" stroke="#8ea3c8" stroke-width=".9"/><rect x="-1.700" y="2.400" width="3.400" height="2.600" fill="#8ea3c8"/></g><path d="M458.800 37.600l2.600 4.600" stroke="#7a9a7a" stroke-width="1"/><rect x="472.6" y="34.7" width=".8" height="11" fill="#8aa6d6"/><rect x="473.4" y="34.7" width=".7" height="11" fill="#eef4fd"/><g transform="translate(481.6 40.2) scale(.9)"><path d="M-4.800 0l4.400-4.400v2.600h4.600v3.600h-4.600v2.600z" fill="#b02a8a" stroke="#3a0a2a" stroke-width=".7"/><path d="M-2.600 0l2-2v4z" fill="#f0a0d0"/></g><g transform="translate(494.4 40.2) scale(.9)"><path d="M4.800 0l-4.400-4.400v2.600h-4.600v3.600h4.600v2.600z" fill="#c6d2ea" stroke="#9aaacb" stroke-width=".7"/></g><rect x="502.4" y="34.7" width=".8" height="11" fill="#8aa6d6"/><rect x="503.2" y="34.7" width=".7" height="11" fill="#eef4fd"/><g transform="translate(511.6 40.2) scale(.9)"><circle cx="-2.400" cy="-2.800" r="1.800" fill="#e8eefa" stroke="#5a6a9a" stroke-width=".7"/><circle cx="2.600" cy="-2.800" r="1.800" fill="#e8eefa" stroke="#5a6a9a" stroke-width=".7"/><circle cx="-2.400" cy="2.800" r="1.800" fill="#4a6ad0" stroke="#2a3a7a" stroke-width=".6"/><circle cx="2.600" cy="2.800" r="1.800" fill="#fff" stroke="#5a6a9a" stroke-width=".7"/><path d="M-2.400 -1v2" stroke="#3a4a8a" stroke-width=".7"/></g><g transform="translate(525.4 40.2) scale(.9)"><path d="M-5 -4.400v5M5 -4.400v5M-5 -2h10" stroke="#101828" stroke-width="1.300"/><path d="M-3.600 -3.400l-1.400 1.400 1.400 1.400M3.600 -3.400l1.400 1.400-1.400 1.400" fill="none" stroke="#101828" stroke-width=".8"/><rect x="-5" y="1.600" width="10" height="3.200" fill="#e6e23a" stroke="#3a4a10" stroke-width=".7"/><rect x="-5" y="3.400" width="10" height="1.400" fill="#3a8a2a"/></g><g transform="translate(539.4 40.2) scale(.9)"><path d="M-4.800 .2l2.400-3.600h6l-2.400 3.600z" fill="#d02a2a" stroke="#3a0a0a" stroke-width=".6"/><rect x="-4.800" y=".2" width="8.400" height="4.400" fill="#fff" stroke="#3a0a0a" stroke-width=".7"/><path d="M-.6 .2v4.400M-4.800 2.400h8.400" stroke="#d02a2a" stroke-width=".8"/><path d="M2.400 -5.200l1 1.800 2-.4-1.200 1.600 1 1.800-2-.6-1.400 1.400v-2l-1.800-1 2-.6z" fill="#f4c21a" stroke="#a06a00" stroke-width=".3"/></g><path d="M547.6 40.2h3.6l-1.800 2z" fill="#111"/><g transform="translate(580.6 40.2) scale(.9)"><rect x="-5.400" y="-4.200" width="10.800" height="8.800" fill="#f4f4f4" stroke="#222" stroke-width=".7"/><rect x="-5.400" y="-4.200" width="10.800" height="2.200" fill="#1a1a1a"/><rect x="-5.400" y="-1" width="10.800" height="1.400" fill="#333"/><rect x="-4.600" y="1.200" width="2.200" height="2.800" fill="#e02a6a"/><rect x="-1.100" y="1.200" width="2.200" height="2.800" fill="#2aa02a"/><rect x="2.400" y="1.200" width="2.200" height="2.800" fill="#2a4ae0"/></g><g transform="translate(606.0 40.2) scale(.9)"><path d="M-4.600 4.600l8-8.400" stroke="#e6eefa" stroke-width="2"/><path d="M-4.600 4.600l8-8.400" stroke="#a9bad8" stroke-width=".8"/><circle cx="4" cy="-4.200" r="1.200" fill="#a9bad8"/></g><g transform="translate(15.6 56.0) scale(.9)"><rect x="-4.800" y="-4.600" width="9" height="9" fill="#f2d0d0" stroke="#c01a1a" stroke-width="1.100"/><rect x="-2.800" y="-2.600" width="5" height="5" fill="#e6a0a0" stroke="#c01a1a" stroke-width=".6"/><path d="M-.6 -1.200l4.800 4.400-2 .2 1 2-1 .5-1-2-1.600 1.200z" fill="#111"/></g><g transform="translate(29.6 56.0) scale(.9)"><path d="M-4.600 -3.800l5.800 5.200-2.400.3 1.300 2.600-1.300.6-1.200-2.600-2.200 1.500z" fill="#111"/><path d="M1.400 -5l3.800 3.800M5.200 -5l-3.800 3.800" stroke="#e01a2a" stroke-width="1.400"/></g><g transform="translate(45.6 56.0) scale(.9)"><rect x="-4.600" y="-4.600" width="8" height="8" fill="#eef2fa" stroke="#1a1a2a" stroke-width=".9" stroke-dasharray="1.400 1"/><path d="M-.6 -.6l5 4.600-2 .2 1 2.200-1.100.5-1-2.200-1.900 1.300z" fill="#111"/><path d="M-4.600 4.800h3" stroke="#111" stroke-width="1"/></g><path d="M52.8 56.0h3.6l-1.800 2z" fill="#111"/><g transform="translate(65.6 56.0) scale(.9)"><path d="M-4 1l4-4.600 4 3-1.400 4.600-3.600 1z" fill="#dbe4f4" stroke="#a4b4d2" stroke-width=".8"/><path d="M-1 -1l2 4" stroke="#a4b4d2" stroke-width=".8"/></g><path d="M72.8 56.0h3.6l-1.800 2z" fill="#8ea3c8"/><g transform="translate(92.6 56.0) scale(.9)"><circle cx="-2" cy="-1.600" r="2.800" fill="#f0c0e0" stroke="#7a1a6a" stroke-width=".9"/><circle cx=".6" cy=".6" r="2.800" fill="#e8e0f8" stroke="#3a2a8a" stroke-width=".9"/><rect x="2" y="1.800" width="3.400" height="3.200" fill="#c8d0b8" stroke="#3a4a3a" stroke-width=".6"/></g><rect x="100.2" y="49.5" width="13.2" height="12.6" fill="#f6b55f" stroke="#2b2868" stroke-width="1"/><rect x="113.8" y="49.5" width="13.4" height="12.6" fill="#f6b55f" stroke="#2b2868" stroke-width="1"/><rect x="127.6" y="49.5" width="13.4" height="12.6" fill="#f6b55f" stroke="#2b2868" stroke-width="1"/><g transform="translate(106.8 56.0) scale(.9)"><path d="M-4.200 2.600l3.200-5.400 4 1.200-3.400 5.400z" fill="#ffd0b0" stroke="#d02a4a" stroke-width=".9"/><circle cx="-3" cy="1.800" r="1.400" fill="none" stroke="#d02a4a" stroke-width=".8"/><rect x="2.200" y="1.600" width="3.400" height="3.200" fill="#c8d0b8" stroke="#3a4a3a" stroke-width=".6"/></g><g transform="translate(120.4 56.0) scale(.9)"><path d="M-4.400 1.600c0-3 2.400-5 5-4.400l2.600 2.600-2.400 1-1-1.400c-1.400 0-2 1-2 2.600z" fill="#ffd0b0" stroke="#d02a4a" stroke-width=".9"/><rect x="2.200" y="1.600" width="3.400" height="3.200" fill="#c8d0b8" stroke="#3a4a3a" stroke-width=".6"/></g><g transform="translate(134.2 56.0) scale(.9)"><path d="M-4.400 3.800l6.800-8M-2 4.400l6.400-7.600" stroke="#c84a3a" stroke-width="1"/><path d="M-4.400 .8l4.400-5.200" stroke="#c84a3a" stroke-width=".8"/><rect x="2.200" y="1.600" width="3.400" height="3.200" fill="#c8d0b8" stroke="#3a4a3a" stroke-width=".6"/></g><g transform="translate(147.6 56.0) scale(.9)"><rect x="-4" y="-2.600" width="1.800" height="1.800" fill="#7a1a8a"/><rect x="-0.6" y="0" width="3.400" height="3.200" fill="#c8d0b8" stroke="#3a4a3a" stroke-width=".6"/></g><rect x="154.2" y="49.5" width="13.2" height="12.6" fill="#f6b55f" stroke="#2b2868" stroke-width="1"/><g transform="translate(160.8 56.0) scale(.9)"><path d="M-4.600 1.400l6-4.400 2.400 2.400-6 4.200z" fill="#ffc0d8" stroke="#e0327a" stroke-width=".9"/><path d="M-3 -.6l4 3" stroke="#fff" stroke-width=".7"/><rect x="2.200" y="1.600" width="3.400" height="3.200" fill="#c8d0b8" stroke="#3a4a3a" stroke-width=".6"/></g><g transform="translate(174.0 56.0) scale(.9)"><path d="M-4.800 -3.600h8M-.8 -3.600v7.600" stroke="#b01a8a" stroke-width="1.700"/><rect x="-5" y="-4.600" width="8.400" height="2.200" fill="#d060b0" stroke="#6a0a5a" stroke-width=".5"/><rect x="2.200" y="1.600" width="3.400" height="3.200" fill="#c8d0b8" stroke="#3a4a3a" stroke-width=".6"/></g><g transform="translate(187.4 56.0) scale(.9)"><path d="M-5 .4l4.400-4v2.200h3.600v3.600h-3.600v2.200z" fill="#a01a9a" stroke="#4a0a4a" stroke-width=".6"/><rect x="2.400" y="2" width="3.400" height="3.200" fill="#c8d0b8" stroke="#3a4a3a" stroke-width=".6"/></g><rect x="193.8" y="49.5" width="13.2" height="12.6" fill="#f6b55f" stroke="#2b2868" stroke-width="1"/><g transform="translate(200.4 56.0) scale(.9)"><path d="M-4.400 -4.200h8.400M-4.400 4.200h8.400" stroke="#b02a2a" stroke-width="1"/><path d="M-3.600 3.400l2.600-6.600 1.800 4 2.800-4.200" fill="none" stroke="#b02a2a" stroke-width="1.200"/><path d="M-4.400 -1.400l2 2" stroke="#fff" stroke-width=".8"/></g><g transform="translate(213.6 56.0) scale(.9)"><rect x="-3.600" y="-4" width="3" height="8" fill="#d4deef" stroke="#aabbd8" stroke-width=".7"/><rect x=".6" y="-2" width="3.400" height="6" fill="#d4deef" stroke="#aabbd8" stroke-width=".7"/></g><g transform="translate(227.6 56.0) scale(.9)"><path d="M-5.400 2l3.800-3.400v2h6.600v2.800h-6.600v2z" fill="#1a3ae0" stroke="#0a1a8a" stroke-width=".5"/><path d="M-1 -4.600h6.200M-1 -2.600h6.200" stroke="#2a4ad0" stroke-width="1.200"/><rect x="-4.600" y="-5" width="2" height="2.600" fill="#4a6ae0"/></g><g transform="translate(248.2 56.0) scale(.9)"><path d="M-4 -4.400l2.600 3.400M-1.400 -1l-.4 3.800 3.200 1.400" fill="none" stroke="#3a5ad0" stroke-width="1"/><circle cx="-4" cy="-4.200" r="1.200" fill="#6a3ad0"/><rect x="1" y=".6" width="3.800" height="3.600" fill="#c8d0e0" stroke="#4a5a7a" stroke-width=".6"/><path d="M.4 -3l2.400 1.600" stroke="#7a5ae0" stroke-width=".9"/></g><g transform="translate(262.0 56.0) scale(.9)"><path d="M-5 -3h10l-3.600 4.200v3.600l-2.800-1.200v-2.400z" fill="#e8eefc" stroke="#2a3ac0" stroke-width="1"/><path d="M-4 -4.800l1 1.400M0 -5.200v1.600M4 -4.800l-1 1.400" stroke="#7a2ad0" stroke-width=".9"/></g><g transform="translate(283.0 56.0) scale(.9)"><path d="M-4.600 2.400c0-1.900 2.300-3 4.400-3s4.400 1 4.400 2.800-1.900 2.700-4.400 2.700-4.400-.7-4.400-2.500z" fill="#46b436" stroke="#1d6a14" stroke-width=".7"/><path d="M-3.600 1.600v-6.400M-3.600 -4.800l-1.200 1.600M-3.600 -4.800l1.200 1.600M-3.600 -1.800l5.600-2.400" fill="none" stroke="#111" stroke-width=".9"/><circle cx="2.600" cy="-4.200" r="1.100" fill="#c02a2a"/></g><g transform="translate(296.8 56.0) scale(.9)"><path d="M-4.600 2.400c0-1.900 2.300-3 4.400-3s4.400 1 4.400 2.800-1.900 2.700-4.400 2.700-4.400-.7-4.400-2.500z" fill="#b8b84a" stroke="#5a5a10" stroke-width=".7"/><path d="M-4 -4.400l2.600 3M-1.400 -1.400h4" stroke="#111" stroke-width=".9"/><rect x="-5" y="-5.200" width="2.200" height="2.200" fill="#111"/><rect x="2" y="-2.600" width="2.600" height="2.400" fill="#111"/></g><g transform="translate(309.4 56.0) scale(.9)"><path d="M-4 -2l3.600-2.400 1.600 2.400M1.200 -4.400v9M-3.600 2h4.800" fill="none" stroke="#a9b9d6" stroke-width="1"/><rect x="2" y="-1" width="2.600" height="4.400" fill="#c9d6ec" stroke="#a9b9d6" stroke-width=".5"/></g><rect x="317.2" y="50.5" width=".8" height="11" fill="#8aa6d6"/><rect x="318.0" y="50.5" width=".7" height="11" fill="#eef4fd"/><g transform="translate(326.0 56.0) scale(.9)"><path d="M-4.600 2.400c0-1.900 2.300-3 4.400-3s4.400 1 4.400 2.800-1.900 2.700-4.400 2.700-4.400-.7-4.400-2.500z" fill="#46b436" stroke="#1d6a14" stroke-width=".7"/><path d="M-1 -1.600l3-3.200 2.200 1.800-2.800 3z" fill="#2a8a1a" stroke="#114a0a" stroke-width=".6"/><circle cx="3.600" cy="-4.400" r="1.100" fill="#111"/></g><g transform="translate(339.6 56.0) scale(.9)"><path d="M-4.600 2.400c0-1.900 2.300-3 4.400-3s4.400 1 4.400 2.800-1.900 2.700-4.400 2.700-4.400-.7-4.400-2.500z" fill="#46b436" stroke="#1d6a14" stroke-width=".7"/><path d="M-2 -1.800l2.600-2.800 2 1.600" fill="none" stroke="#114a0a" stroke-width="1.100"/><circle cx="3.800" cy="-3.600" r="1.300" fill="#111"/><circle cx="-3.400" cy="-3.600" r="1.100" fill="#2a8a1a"/></g><g transform="translate(353.2 56.0) scale(.9)"><rect x="-5.200" y="-5" width="7.600" height="6.400" fill="#f4f4fa" stroke="#2a2a6a" stroke-width=".7"/><rect x="-5.200" y="-5" width="7.600" height="2" fill="#2a3ab0"/><path d="M-1.400 3c0-1.800 1.800-2.800 3.600-2.800s3.400 1 3.400 2.600-1.500 2.600-3.500 2.600-3.500-.6-3.500-2.400z" fill="#3aa82a" stroke="#185a10" stroke-width=".6"/><circle cx="3.400" cy="-1.600" r="1.500" fill="#2a9a1a" stroke="#114a0a" stroke-width=".4"/></g><g transform="translate(366.8 56.0) scale(.9)"><rect x="-5.200" y="-5" width="7.600" height="6.400" fill="#f4f4fa" stroke="#2a2a6a" stroke-width=".7"/><rect x="-5.200" y="-5" width="7.600" height="2" fill="#8a2a9a"/><path d="M-1.400 3c0-1.800 1.800-2.800 3.600-2.800s3.400 1 3.400 2.600-1.500 2.600-3.500 2.600-3.500-.6-3.500-2.400z" fill="#3aa82a" stroke="#185a10" stroke-width=".6"/><circle cx="3.400" cy="-1.600" r="1.500" fill="#2a9a1a" stroke="#114a0a" stroke-width=".4"/></g><g transform="translate(380.2 56.0) scale(.9)"><path d="M-4.600 2.400c0-1.900 2.300-3 4.400-3s4.400 1 4.400 2.800-1.900 2.700-4.400 2.700-4.400-.7-4.400-2.500z" fill="#46b436" stroke="#1d6a14" stroke-width=".7"/><path d="M-.6 -1.600v-3.400M-2.400 -3.400l1.800-1.800 1.800 1.800" fill="none" stroke="#d8a010" stroke-width="1.200"/><path d="M1.800 -4.800h3" stroke="#d8a010" stroke-width="1.400"/></g><g transform="translate(393.4 56.0) scale(.9)"><rect x="-4.8" y="-5" width="3.400" height="3.400" rx=".8" fill="#d8f0d0" stroke="#1a8a1a" stroke-width=".7"/><rect x="0.6" y="-5" width="3.400" height="3.400" rx=".8" fill="#d8f0d0" stroke="#1a8a1a" stroke-width=".7"/><rect x="-4.8" y="0.6" width="3.400" height="3.400" rx=".8" fill="#d8d8f8" stroke="#2a2ab0" stroke-width=".7"/><rect x="0.6" y="0.6" width="3.400" height="3.400" rx=".8" fill="#d8f0d0" stroke="#1a8a1a" stroke-width=".7"/><path d="M-1.400 -3.300h2M-1.400 2.300h2" stroke="#1a8a1a" stroke-width=".7"/></g><g transform="translate(406.8 56.0) scale(.9)"><rect x="-5" y="-2.200" width="3.600" height="4.400" fill="#dfe8fa" stroke="#2a3a9a" stroke-width=".8"/><rect x="1.400" y="-2.200" width="3.600" height="4.400" fill="#dfe8fa" stroke="#2a3a9a" stroke-width=".8"/><path d="M0 -4.800v9.600" stroke="#1a8a2a" stroke-width="1"/></g><rect x="414.8" y="50.5" width=".8" height="11" fill="#8aa6d6"/><rect x="415.6" y="50.5" width=".7" height="11" fill="#eef4fd"/><g transform="translate(423.8 56.0) scale(.9)"><path d="M-5 -2.200l2.400-2.600h7.600v7l-2.400 2.600h-7.600z" fill="#b8dca0" stroke="#1a3a10" stroke-width=".8"/><path d="M-3 3v-4.400l4.400-1.400v4.400z" fill="#3a9a2a" stroke="#1a3a10" stroke-width=".6"/><path d="M-1.600 2l3.400-3.800" stroke="#e8f4d8" stroke-width=".8"/></g><rect x="431.6" y="50.5" width=".8" height="11" fill="#8aa6d6"/><rect x="432.4" y="50.5" width=".7" height="11" fill="#eef4fd"/><g transform="translate(441.2 56.0) scale(.9)"><path d="M-4.600 -4.800v6M-4.600 -4.800l-1 1.600M-4.600 -4.800l1 1.600" fill="none" stroke="#111" stroke-width=".9"/><path d="M-3 .6l4-2.800.6 2 3.400-.6-1 3.200 1.600 1.600-3.400.6-1.200 1.600-1.600-2.400z" fill="#e01a1a" stroke="#7a0a0a" stroke-width=".4"/><circle cx="-4.600" cy="2" r="1" fill="#1a7a2a"/></g><rect x="448.4" y="50.5" width=".8" height="11" fill="#8aa6d6"/><rect x="449.2" y="50.5" width=".7" height="11" fill="#eef4fd"/><g transform="translate(457.8 56.0) scale(.9)"><rect x="-5.400" y="-5" width="10.800" height="10" fill="#e8d89a" stroke="#2a2a4a" stroke-width=".8"/><rect x="-5.400" y="-5" width="10.800" height="2.400" fill="#3a4a9a"/><path d="M-3.200 -1v3.800h6.400v-3.800" fill="#f4f0c0" stroke="#2a6a4a" stroke-width="1.200"/><rect x="-1.600" y="-.6" width="3.200" height="2.400" fill="#e8c02a"/></g><g transform="translate(471.6 56.0) scale(.9)"><circle cx="-2" cy="-2.800" r="2.200" fill="#d8d0e8" stroke="#6a5a8a" stroke-width=".7"/><path d="M-3.600 1.600c0 2 1.600 3 3.400 3M-.2 4.600l-1.400-1.600M-.2 4.600l-1.800.8" fill="none" stroke="#1a6a2a" stroke-width="1"/><rect x="1.200" y=".6" width="3.800" height="3.800" fill="#3aaa3a" stroke="#0a4a1a" stroke-width=".7"/></g><g transform="translate(484.6 56.0) scale(.9)"><path d="M-3.800 -4.400l5.400 4.400-5.400 4.400z" fill="#1030e0"/><rect x="2.600" y="-4.400" width="1.900" height="8.800" fill="#1030e0"/></g><g transform="translate(505.8 56.0) scale(.9)"><rect x="-5" y="-3.600" width="8.600" height="8.200" fill="#f4f6fa" stroke="#3a4a5a" stroke-width=".8"/><path d="M-3.400 2.600l2-3.800 1.800 2.800" fill="none" stroke="#5a6a7a" stroke-width=".7"/><path d="M5.200 -5.400l-4.800 7-1 .4.200-1.200 4.600-6.800z" fill="#2a2a2a" stroke="#111" stroke-width=".5"/><path d="M4.200 -5.800l1.600 1" stroke="#d8a010" stroke-width="1.200"/></g><g transform="translate(519.4 56.0) scale(.9)"><path d="M-4.800 3.800l1.200-6.400 3.200 2 3.400-2.600 1.600 6.600c-2.200-1.600-3.400-1.600-4.600 0-1.600-1.400-3-1.400-4.800.4z" fill="#e8eef8" stroke="#4a5a6a" stroke-width=".9"/></g></svg></div></body></html>
